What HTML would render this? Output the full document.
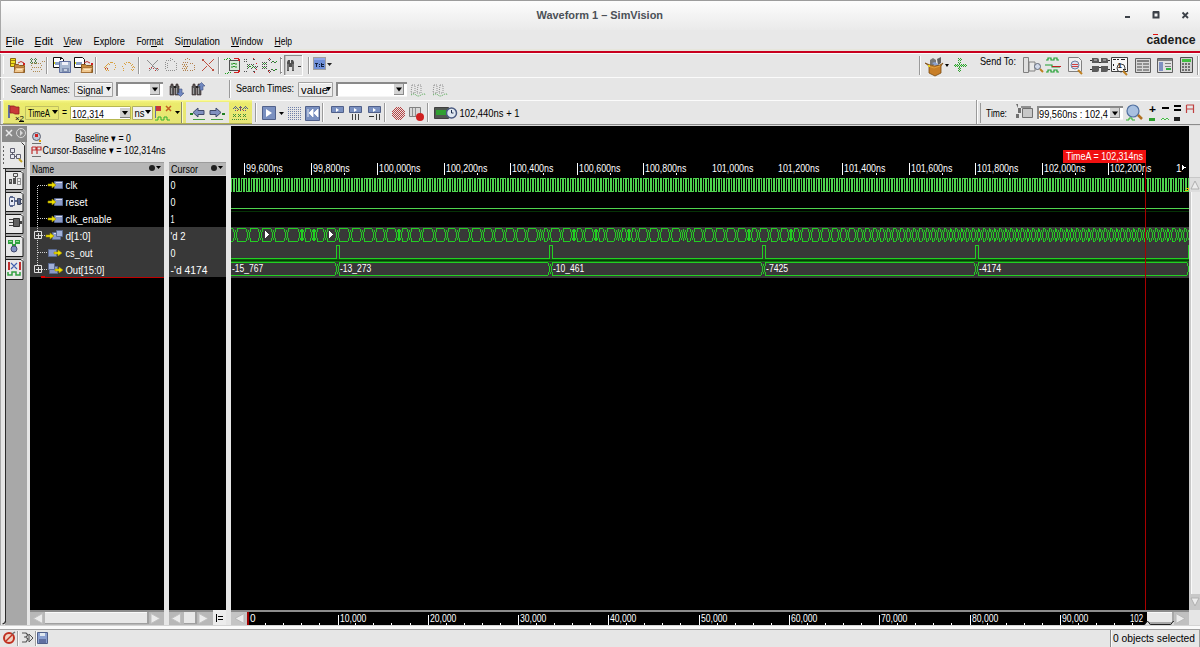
<!DOCTYPE html><html><head><meta charset="utf-8"><style>html,body{margin:0;padding:0;width:1200px;height:647px;overflow:hidden;background:#e6e6e6}svg{display:block}text{font-family:"Liberation Sans",sans-serif}</style></head><body><svg width="1200" height="647" viewBox="0 0 1200 647"><defs><linearGradient id="tg" x1="0" y1="0" x2="0" y2="1"><stop offset="0" stop-color="#fdfdfd"/><stop offset="1" stop-color="#eaeaea"/></linearGradient><linearGradient id="yg" x1="0" y1="0" x2="0" y2="1"><stop offset="0" stop-color="#f4f488"/><stop offset="0.15" stop-color="#ebeb6c"/><stop offset="1" stop-color="#e6e478"/></linearGradient></defs>
<rect x="0" y="0" width="1200" height="647" fill="#e6e6e6" />
<rect x="0" y="0" width="1200" height="30" fill="url(#tg)" />
<rect x="0" y="0" width="1200" height="1" fill="#9c9c9c" />
<text x="536.5" y="19" font-size="11" fill="#4b5057" font-weight="bold" textLength="126.5" lengthAdjust="spacingAndGlyphs">Waveform 1 – SimVision</text>
<rect x="1125" y="16" width="5" height="2" fill="#3c4148" />
<path d="M1153.5,12.5h5v5h-5z" fill="none" stroke="#3c4148" stroke-width="2" />
<rect x="1153" y="11" width="6" height="2" fill="#3c4148" />
<path d="M1182.5,12.5l5.5,5.5M1188,12.5l-5.5,5.5" fill="none" stroke="#3c4148" stroke-width="1.8" />
<rect x="0" y="30" width="1200" height="21" fill="#e8e8e8" />
<rect x="0" y="49" width="1200" height="2" fill="#e6e6dc" />
<text x="5.6" y="45" font-size="11" fill="#000" textLength="18.4" lengthAdjust="spacingAndGlyphs">File</text>
<text x="34.5" y="45" font-size="11" fill="#000" textLength="18.5" lengthAdjust="spacingAndGlyphs">Edit</text>
<text x="63.5" y="45" font-size="11" fill="#000" textLength="18.5" lengthAdjust="spacingAndGlyphs">View</text>
<text x="93.5" y="45" font-size="11" fill="#000" textLength="31.5" lengthAdjust="spacingAndGlyphs">Explore</text>
<text x="136.4" y="45" font-size="11" fill="#000" textLength="27" lengthAdjust="spacingAndGlyphs">Format</text>
<text x="174.6" y="45" font-size="11" fill="#000" textLength="45.4" lengthAdjust="spacingAndGlyphs">Simulation</text>
<text x="231" y="45" font-size="11" fill="#000" textLength="32" lengthAdjust="spacingAndGlyphs">Window</text>
<text x="274.5" y="45" font-size="11" fill="#000" textLength="17.5" lengthAdjust="spacingAndGlyphs">Help</text>
<rect x="6" y="46" width="6" height="1" fill="#000" />
<rect x="34.5" y="46" width="6" height="1" fill="#000" />
<rect x="63.5" y="46" width="6" height="1" fill="#000" />
<rect x="151" y="46" width="6" height="1" fill="#000" />
<rect x="183" y="46" width="7" height="1" fill="#000" />
<rect x="231" y="46" width="8" height="1" fill="#000" />
<rect x="274.5" y="46" width="6" height="1" fill="#000" />
<text x="1146.5" y="44" font-size="12.5" fill="#1c1c1c" font-weight="bold" textLength="49" lengthAdjust="spacingAndGlyphs">cadence</text>
<rect x="1153" y="34" width="5" height="1" fill="#e01010" />
<rect x="0" y="0" width="1" height="647" fill="#a8a8a8" />
<rect x="0" y="51" width="1200" height="2" fill="#c8001e" />
<rect x="0" y="53" width="1200" height="1" fill="#fbfbfb" />
<rect x="0" y="77" width="1200" height="1" fill="#fbfbfb" />
<rect x="0" y="100" width="1200" height="1" fill="#fbfbfb" />
<rect x="0" y="124" width="1200" height="1" fill="#8c8c8c" />
<rect x="0" y="125" width="1200" height="1" fill="#dcdcdc" />
<rect x="46" y="57" width="1" height="17" fill="#9a9a9a" />
<rect x="47" y="57" width="1" height="17" fill="#fdfdfd" />
<rect x="95" y="57" width="1" height="17" fill="#9a9a9a" />
<rect x="96" y="57" width="1" height="17" fill="#fdfdfd" />
<rect x="138" y="57" width="1" height="17" fill="#9a9a9a" />
<rect x="139" y="57" width="1" height="17" fill="#fdfdfd" />
<rect x="218" y="57" width="1" height="17" fill="#9a9a9a" />
<rect x="219" y="57" width="1" height="17" fill="#fdfdfd" />
<rect x="280" y="57" width="1" height="17" fill="#9a9a9a" />
<rect x="281" y="57" width="1" height="17" fill="#fdfdfd" />
<rect x="308" y="57" width="1" height="17" fill="#9a9a9a" />
<rect x="309" y="57" width="1" height="17" fill="#fdfdfd" />
<rect x="919" y="56" width="1" height="19" fill="#9a9a9a" />
<rect x="920" y="56" width="1" height="19" fill="#fdfdfd" />
<rect x="1197" y="56" width="1" height="19" fill="#9a9a9a" />
<rect x="1198" y="56" width="1" height="19" fill="#fdfdfd" />
<rect x="3" y="56" width="1" height="18" fill="#fdfdfd" />
<path d="M10.5,58.5h5v8h-5z" fill="#f0e020" stroke="#8a6a10" stroke-width="1" />
<rect x="11" y="60" width="4" height="1" fill="#a08010" />
<rect x="11" y="63" width="4" height="1" fill="#a08010" />
<path d="M14.5,64.5h4l1,1h5v7h-10z" fill="#c88a40" stroke="#8a5a20" stroke-width="1" />
<path d="M15.5,67.5h9l-1.5,5h-9z" fill="#f0c890" stroke="#a06a30" stroke-width="0.8" />
<rect x="17" y="69" width="5" height="1" fill="#fce8c0" />
<path d="M18,63q3,-3 6,0" fill="none" stroke="#c03030" stroke-width="1" />
<rect x="23" y="63" width="2" height="2" fill="#d02020" />
<path d="M30,59h1v1h-1zM32,59h1v1h-1zM31,58h1v1h-1zM31,60h1v1h-1zM34,59h1v1h-1zM36,59h1v1h-1zM35,58h1v1h-1zM35,60h1v1h-1zM30,62h1v1h-1zM32,62h1v1h-1zM31,61h1v1h-1zM31,63h1v1h-1zM34,62h1v1h-1zM36,62h1v1h-1zM35,61h1v1h-1zM35,63h1v1h-1z" fill="#508050" shape-rendering="crispEdges"/>
<path d="M32,63h1v1h-1zM34,63h1v1h-1zM36,63h1v1h-1zM38,63h1v1h-1zM40,63h1v1h-1zM31,65h1v1h-1zM41,65h1v1h-1zM32,67h1v1h-1zM34,67h1v1h-1zM36,67h1v1h-1zM38,67h1v1h-1zM40,67h1v1h-1zM31,69h1v1h-1zM41,69h1v1h-1zM33,71h1v1h-1zM35,71h1v1h-1zM37,71h1v1h-1zM39,71h1v1h-1zM42,61h1v1h-1zM44,61h1v1h-1z" fill="#b08a50" shape-rendering="crispEdges"/>
<path d="M53.5,57.5h8l2,2v8h-10z" fill="#fff" stroke="#101010" stroke-width="1" />
<rect x="55" y="62" width="6" height="3" fill="#8aa0c8" />
<rect x="54" y="62" width="1" height="2" fill="#e0e000" />
<path d="M59.5,61.5h11v11h-11z" fill="#a8b8d0" stroke="#6070a0" stroke-width="1" />
<rect x="62" y="62" width="6" height="3" fill="#eef0f8" />
<rect x="62" y="68" width="7" height="4" fill="#8090b0" />
<rect x="64" y="69" width="3" height="2" fill="#c8d0e0" />
<rect x="60" y="57" width="1" height="3" fill="#101010" />
<rect x="61" y="58" width="2" height="1" fill="#101010" />
<path d="M74.5,57.5h8l2,2v8h-10z" fill="#fff" stroke="#101010" stroke-width="1" />
<rect x="76" y="62" width="6" height="3" fill="#8aa0c8" />
<rect x="75" y="62" width="1" height="2" fill="#e0e000" />
<path d="M81.5,64.5h4l1,1h6v7h-11z" fill="#c88a40" stroke="#8a5a20" stroke-width="1" />
<path d="M82.5,67.5h10l-1.5,5h-10z" fill="#f0c890" stroke="#a06a30" stroke-width="0.8" />
<rect x="84" y="69" width="6" height="1" fill="#fce8c0" />
<path d="M84,63q3,-3 6,0" fill="none" stroke="#c03030" stroke-width="1" />
<rect x="91" y="63" width="2" height="2" fill="#d02020" />
<path d="M105,66h1v1h-1zM106,65h1v1h-1zM107,64h1v1h-1zM108,63h1v1h-1zM110,62h1v1h-1zM112,62h1v1h-1zM114,63h1v1h-1zM115,65h1v1h-1zM115,67h1v1h-1zM114,69h1v1h-1zM104,67h1v1h-1zM106,67h1v1h-1zM105,69h1v1h-1zM107,69h1v1h-1zM106,70h1v1h-1zM108,70h1v1h-1zM109,64h1v1h-1zM111,62h1v1h-1z" fill="#d8a040" shape-rendering="crispEdges"/>
<path d="M124,63h1v1h-1zM126,62h1v1h-1zM128,62h1v1h-1zM130,63h1v1h-1zM132,64h1v1h-1zM133,66h1v1h-1zM134,67h1v1h-1zM132,67h1v1h-1zM131,69h1v1h-1zM133,69h1v1h-1zM132,70h1v1h-1zM122,66h1v1h-1zM123,68h1v1h-1zM123,70h1v1h-1zM125,64h1v1h-1zM129,62h1v1h-1zM131,65h1v1h-1z" fill="#d8a040" shape-rendering="crispEdges"/>
<path d="M105,68h1v1h-1zM107,68h1v1h-1z" fill="#c03030" shape-rendering="crispEdges"/>
<path d="M147,60h1v1h-1zM148,61h1v1h-1zM149,62h1v1h-1zM150,63h1v1h-1zM151,64h1v1h-1zM152,65h1v1h-1zM153,66h1v1h-1zM154,67h1v1h-1zM155,68h1v1h-1zM156,69h1v1h-1zM157,70h1v1h-1zM157,60h1v1h-1zM156,61h1v1h-1zM155,62h1v1h-1zM154,63h1v1h-1zM153,64h1v1h-1zM152,66h1v1h-1zM151,68h1v1h-1zM150,69h1v1h-1zM149,70h1v1h-1zM156,68h1v1h-1zM158,69h1v1h-1z" fill="#909090" shape-rendering="crispEdges"/>
<path d="M151,67h1v1h-1zM153,68h1v1h-1zM155,70h1v1h-1zM149,68h1v1h-1zM157,68h1v1h-1z" fill="#c03030" shape-rendering="crispEdges"/>
<path d="M166,60h1v1h-1zM168,60h1v1h-1zM170,60h1v1h-1zM165,62h1v1h-1zM165,64h1v1h-1zM165,66h1v1h-1zM165,68h1v1h-1zM166,70h1v1h-1zM168,70h1v1h-1zM170,70h1v1h-1zM172,70h1v1h-1zM174,70h1v1h-1zM176,69h1v1h-1zM176,67h1v1h-1zM176,65h1v1h-1zM176,63h1v1h-1zM174,61h1v1h-1zM172,59h1v1h-1zM170,58h1v1h-1zM167,63h1v1h-1zM167,65h1v1h-1zM167,67h1v1h-1z" fill="#909090" shape-rendering="crispEdges"/>
<path d="M187,58h1v1h-1zM189,59h1v1h-1zM185,59h1v1h-1zM183,62h1v1h-1zM185,62h1v1h-1zM187,62h1v1h-1zM182,64h1v1h-1zM184,64h1v1h-1zM186,64h1v1h-1zM183,66h1v1h-1zM185,66h1v1h-1zM187,66h1v1h-1zM182,68h1v1h-1zM184,68h1v1h-1zM186,68h1v1h-1zM183,70h1v1h-1zM185,70h1v1h-1zM187,70h1v1h-1zM190,63h1v1h-1zM192,63h1v1h-1zM194,65h1v1h-1zM194,67h1v1h-1zM194,69h1v1h-1zM192,70h1v1h-1zM190,70h1v1h-1z" fill="#b08050" shape-rendering="crispEdges"/>
<path d="M184,65h1v1h-1zM186,67h1v1h-1zM185,69h1v1h-1z" fill="#d8a860" shape-rendering="crispEdges"/>
<path d="M202,59h1v1h-1zM203,60h1v1h-1zM204,61h1v1h-1zM205,62h1v1h-1zM206,63h1v1h-1zM207,64h1v1h-1zM208,65h1v1h-1zM209,66h1v1h-1zM210,67h1v1h-1zM211,68h1v1h-1zM212,69h1v1h-1zM213,70h1v1h-1zM213,59h1v1h-1zM212,60h1v1h-1zM211,61h1v1h-1zM210,62h1v1h-1zM209,63h1v1h-1zM206,66h1v1h-1zM205,67h1v1h-1zM204,68h1v1h-1zM203,69h1v1h-1zM202,70h1v1h-1zM203,59h1v1h-1zM202,60h1v1h-1zM212,70h1v1h-1zM213,69h1v1h-1z" fill="#c05040" shape-rendering="crispEdges"/>
<rect x="229" y="60" width="1" height="11" fill="#505050" />
<rect x="229" y="60" width="11" height="1" fill="#505050" />
<rect x="229" y="70" width="11" height="1" fill="#505050" />
<rect x="239" y="60" width="1" height="11" fill="#505050" />
<rect x="230" y="61" width="9" height="9" fill="#d8e8d8" />
<path d="M231,64h2l1,-1 1,1h2M231,67h2l1,-1 1,1h2" fill="none" stroke="#209020" stroke-width="1" />
<path d="M224,59h1v1h-1zM226,59h1v1h-1zM227,58h1v1h-1zM229,58h1v1h-1zM230,59h1v1h-1zM225,73h1v1h-1zM227,73h1v1h-1zM228,72h1v1h-1zM230,72h1v1h-1z" fill="#20a020" shape-rendering="crispEdges"/>
<rect x="234" y="58" width="5" height="1" fill="#d02020" />
<rect x="238" y="59" width="2" height="2" fill="#d02020" />
<rect x="234" y="72" width="5" height="1" fill="#d02020" />
<rect x="238" y="70" width="2" height="2" fill="#d02020" />
<path d="M244,59h1v1h-1zM244,61h1v1h-1zM246,59h1v1h-1zM246,61h1v1h-1zM253,59h1v1h-1zM254,59h1v1h-1zM244,71h1v1h-1zM246,71h1v1h-1zM253,71h1v1h-1zM254,71h1v1h-1zM247,64h1v1h-1zM249,66h1v1h-1zM247,68h1v1h-1zM249,64h1v1h-1zM247,66h1v1h-1zM251,64h1v1h-1zM253,66h1v1h-1zM251,68h1v1h-1zM253,64h1v1h-1zM255,66h1v1h-1zM256,67h1v1h-1zM257,66h1v1h-1zM255,68h1v1h-1z" fill="#505050" shape-rendering="crispEdges"/>
<path d="M248,65h1v1h-1zM252,65h1v1h-1zM248,67h1v1h-1zM252,67h1v1h-1zM250,66h1v1h-1zM254,67h1v1h-1z" fill="#20a020" shape-rendering="crispEdges"/>
<path d="M253,58h1v1h-1zM254,72h1v1h-1zM256,63h1v1h-1zM256,69h1v1h-1z" fill="#d02020" shape-rendering="crispEdges"/>
<path d="M262,62h1v1h-1zM262,64h1v1h-1zM262,66h1v1h-1zM262,68h1v1h-1zM264,62h1v1h-1zM264,64h1v1h-1zM264,66h1v1h-1zM264,68h1v1h-1zM266,62h1v1h-1zM266,68h1v1h-1zM268,59h1v1h-1zM269,60h1v1h-1zM270,59h1v1h-1zM268,71h1v1h-1zM269,70h1v1h-1zM270,71h1v1h-1zM271,62h1v1h-1zM273,61h1v1h-1zM275,62h1v1h-1zM271,69h1v1h-1zM273,70h1v1h-1zM275,69h1v1h-1zM266,64h1v1h-1zM266,66h1v1h-1z" fill="#505050" shape-rendering="crispEdges"/>
<path d="M263,63h1v1h-1zM265,63h1v1h-1zM263,67h1v1h-1zM265,67h1v1h-1zM272,61h1v1h-1zM274,62h1v1h-1zM272,69h1v1h-1zM274,70h1v1h-1zM276,61h1v1h-1zM276,69h1v1h-1z" fill="#20a020" shape-rendering="crispEdges"/>
<path d="M269,58h1v1h-1zM269,72h1v1h-1zM268,70h1v1h-1z" fill="#d02020" shape-rendering="crispEdges"/>
<rect x="284" y="55" width="19" height="21" fill="#e0e0e0" />
<rect x="284" y="55" width="19" height="1" fill="#8a8a8a" />
<rect x="284" y="55" width="1" height="21" fill="#8a8a8a" />
<rect x="285" y="56" width="1" height="20" fill="#c0c0c0" />
<rect x="284" y="75" width="19" height="1" fill="#fdfdfd" />
<rect x="302" y="55" width="1" height="21" fill="#fdfdfd" />
<path d="M287,62l1,-2h2v3h1v-3h2l1,2v9h-2v-4h-3v4h-2z" fill="#505050" />
<rect x="287" y="64" width="2" height="6" fill="#707070" />
<rect x="292" y="64" width="2" height="6" fill="#707070" />
<rect x="298" y="66" width="3" height="1" fill="#303030" />
<rect x="280" y="58" width="2" height="1" fill="#8a8a8a" />
<rect x="280" y="72" width="2" height="1" fill="#8a8a8a" />
<rect x="313" y="57" width="13" height="13" fill="#a0a0a0" />
<rect x="314" y="58" width="11" height="11" fill="#7090d8" />
<rect x="314" y="58" width="11" height="2" fill="#90a8e8" />
<rect x="315" y="63" width="3" height="1" fill="#102040" />
<rect x="316" y="63" width="1" height="4" fill="#102040" />
<rect x="319" y="64" width="1" height="1" fill="#102040" />
<rect x="319" y="66" width="1" height="1" fill="#102040" />
<rect x="321" y="63" width="1" height="4" fill="#102040" />
<rect x="322" y="64" width="2" height="1" fill="#102040" />
<rect x="322" y="66" width="2" height="1" fill="#102040" />
<path d="M327,63h5l-2.5,3z" fill="#202020" />
<path d="M930,60l3,-2 3,2v5h-6z" fill="#787878" />
<path d="M937,59l4,-2v6l-3,2z" fill="#606060" />
<path d="M932,63l5,4 2,-2-4,-3z" fill="#8aa0d0" />
<path d="M925,63l5,2 5,1 5,-1 3,-2-2,3v7l-6,3-6,-3v-7z" fill="#c87f28" stroke="#7a4a10" stroke-width="0.8" />
<path d="M928,66l6,2 6,-2" fill="none" stroke="#e0a040" stroke-width="1" />
<rect x="928" y="65" width="2" height="2" fill="#e8d020" />
<path d="M945,64h4l-2,3z" fill="#000" />
<path d="M958,58h1v1h-1zM960,58h1v1h-1zM959,59h1v1h-1zM961,59h1v1h-1zM958,60h1v1h-1zM960,60h1v1h-1zM958,62h1v1h-1zM960,62h1v1h-1zM959,63h1v1h-1zM955,64h1v1h-1zM957,64h1v1h-1zM959,64h1v1h-1zM961,64h1v1h-1zM963,64h1v1h-1zM965,64h1v1h-1zM954,65h1v1h-1zM956,65h1v1h-1zM958,65h1v1h-1zM960,65h1v1h-1zM962,65h1v1h-1zM964,65h1v1h-1zM966,65h1v1h-1zM955,66h1v1h-1zM957,66h1v1h-1zM959,66h1v1h-1zM961,66h1v1h-1zM963,66h1v1h-1zM965,66h1v1h-1zM959,67h1v1h-1zM958,68h1v1h-1zM960,68h1v1h-1zM959,69h1v1h-1zM958,70h1v1h-1zM960,70h1v1h-1zM959,71h1v1h-1z" fill="#30a030" shape-rendering="crispEdges"/>
<path d="M959,61h1v1h-1zM957,65h1v1h-1zM961,65h1v1h-1zM959,68h1v1h-1zM955,65h1v1h-1zM963,65h1v1h-1z" fill="#a0e8a0" shape-rendering="crispEdges"/>
<text x="980" y="65" font-size="10.5" fill="#000" textLength="36" lengthAdjust="spacingAndGlyphs">Send To:</text>
<path d="M1023.5,57.5h5v15h-5z" fill="#e0e0e0" stroke="#808080" stroke-width="1" />
<path d="M1029,62h6v9h-6z" fill="#e8e8e8" stroke="#808080" stroke-width="1" />
<path d="M1037.5,66.5m-3,0a3,3 0 1,0 6,0a3,3 0 1,0 -6,0" fill="#d0d8e8" stroke="#606878" stroke-width="1" />
<path d="M1040,69l3,3" fill="none" stroke="#c08020" stroke-width="2" />
<path d="M1046,60h2v-2h3v2h3v-2h3v2h2M1045,65h7v2h8M1046,72h2v-2h3v2h3v-2h3v2h2" fill="none" stroke="#20a030" stroke-width="1.2" />
<rect x="1052" y="66" width="9" height="1" fill="#c02020" />
<path d="M1068.5,57.5h10l3,3v11h-13z" fill="#f0f0f0" stroke="#808080" stroke-width="1" />
<path d="M1075,65m-4,0a4,4 0 1,0 8,0a4,4 0 1,0 -8,0" fill="#d8e0f0" stroke="#7080a0" stroke-width="1" />
<rect x="1072" y="64" width="6" height="1" fill="#d04040" />
<rect x="1072" y="66" width="6" height="1" fill="#d04040" />
<path d="M1078,70l4,4" fill="none" stroke="#c08020" stroke-width="2" />
<path d="M1092,58h5a2,2 0 0 1 2,2v3h-7zM1101,58h5a2,2 0 0 1 2,2v3h-7zM1092,66h7v4a2,2 0 0 1 -2,2h-5zM1101,66h7v4a2,2 0 0 1 -2,2h-5z" fill="#5a5a5a" />
<rect x="1090" y="60" width="2" height="1" fill="#303030" />
<rect x="1090" y="69" width="2" height="1" fill="#303030" />
<rect x="1099" y="62" width="2" height="1" fill="#303030" />
<rect x="1099" y="67" width="2" height="1" fill="#303030" />
<rect x="1108" y="60" width="2" height="1" fill="#303030" />
<rect x="1108" y="69" width="2" height="1" fill="#303030" />
<rect x="1094" y="59" width="3" height="2" fill="#909090" />
<rect x="1103" y="59" width="3" height="2" fill="#909090" />
<path d="M1111.5,57.5h16v14h-16z" fill="#f8f8f8" stroke="#404040" stroke-width="1" />
<rect x="1113" y="59" width="3" height="1" fill="#202020" />
<rect x="1117" y="59" width="2" height="1" fill="#202020" />
<rect x="1121" y="59" width="4" height="1" fill="#202020" />
<rect x="1113" y="69" width="2" height="1" fill="#202020" />
<rect x="1123" y="69" width="3" height="1" fill="#202020" />
<rect x="1113" y="64" width="1" height="2" fill="#202020" />
<text x="1117.5" y="68" font-size="8" fill="#202020" font-weight="bold">1</text>
<path d="M1121,68m-4,0a4,4 0 1,0 8,0a4,4 0 1,0 -8,0" fill="none" stroke="#404040" stroke-width="1" />
<path d="M1123,71l4,4" fill="none" stroke="#c08020" stroke-width="2" />
<path d="M1135.5,58.5h15v14h-15z" fill="#d8d8d8" stroke="#606060" stroke-width="1" />
<rect x="1137" y="60" width="12" height="2" fill="#808080" />
<rect x="1137" y="63" width="5" height="2" fill="#909090" />
<rect x="1143" y="63" width="6" height="2" fill="#909090" />
<rect x="1137" y="66" width="5" height="2" fill="#909090" />
<rect x="1143" y="66" width="6" height="2" fill="#909090" />
<rect x="1137" y="69" width="5" height="2" fill="#909090" />
<rect x="1143" y="69" width="6" height="2" fill="#909090" />
<path d="M1157.5,58.5h15v14h-15z" fill="#e0e0e0" stroke="#606060" stroke-width="1" />
<rect x="1158" y="59" width="14" height="2" fill="#808080" />
<rect x="1159" y="62" width="4" height="9" fill="#8090c0" />
<rect x="1165" y="63" width="6" height="1" fill="#808080" />
<rect x="1165" y="66" width="6" height="1" fill="#808080" />
<rect x="1166" y="68" width="5" height="2" fill="#30b040" />
<path d="M1180.5,57.5h12v15h-12z" fill="#d0d0d0" stroke="#505050" stroke-width="1" />
<rect x="1182" y="59" width="9" height="3" fill="#40c040" />
<rect x="1182" y="63" width="2" height="2" fill="#707070" />
<rect x="1182" y="66" width="2" height="2" fill="#707070" />
<rect x="1182" y="69" width="2" height="2" fill="#707070" />
<rect x="1185" y="63" width="2" height="2" fill="#707070" />
<rect x="1185" y="66" width="2" height="2" fill="#707070" />
<rect x="1185" y="69" width="2" height="2" fill="#707070" />
<rect x="1188" y="63" width="2" height="2" fill="#707070" />
<rect x="1188" y="66" width="2" height="2" fill="#707070" />
<rect x="1188" y="69" width="2" height="2" fill="#707070" />
<rect x="3" y="80" width="1" height="18" fill="#fdfdfd" />
<text x="10.5" y="93" font-size="10.5" fill="#000" textLength="59.5" lengthAdjust="spacingAndGlyphs">Search Names:</text>
<path d="M74.5,82.5h38v14h-38z" fill="#ececec" stroke="#a2a2a2" stroke-width="1" />
<rect x="75" y="83" width="37" height="1" fill="#fafafa" />
<text x="77" y="93.5" font-size="10.5" fill="#000" textLength="26" lengthAdjust="spacingAndGlyphs">Signal</text>
<path d="M106,87h5l-2.5,4z" fill="#000" />
<rect x="116" y="82" width="47" height="15" fill="#fff" />
<rect x="116" y="82" width="47" height="2" fill="#8a8a8a" />
<rect x="116" y="82" width="2" height="15" fill="#8a8a8a" />
<rect x="116" y="96" width="47" height="1" fill="#f4f4f4" />
<rect x="150" y="84" width="10" height="11" fill="#d4d4d4" />
<rect x="150" y="94" width="10" height="1" fill="#8a8a8a" />
<rect x="159" y="84" width="1" height="11" fill="#8a8a8a" />
<path d="M152,87.5h6l-3,4z" fill="#000" />
<path d="M171,84h2v2h1v9h-4v-9h1z M176,84h2v2h1v9h-4v-9h1z" fill="#585858" stroke="#3a2a2a" stroke-width="0.6" />
<rect x="171" y="88" width="1" height="6" fill="#a0a0a0" />
<rect x="176" y="88" width="1" height="6" fill="#a0a0a0" />
<rect x="174" y="86" width="2" height="2" fill="#202020" />
<path d="M179,89h3v4h2l-3.5,3.5-3.5,-3.5h2z" fill="#7088c0" stroke="#405080" stroke-width="0.6" />
<path d="M193,84h2v2h1v9h-4v-9h1z M198,84h2v2h1v9h-4v-9h1z" fill="#585858" stroke="#3a2a2a" stroke-width="0.6" />
<rect x="193" y="88" width="1" height="6" fill="#a0a0a0" />
<rect x="198" y="88" width="1" height="6" fill="#a0a0a0" />
<rect x="196" y="86" width="2" height="2" fill="#202020" />
<path d="M200,90h3v-4h2l-3.5,-3.5-3.5,3.5h2z" fill="#7088c0" stroke="#405080" stroke-width="0.6" />
<rect x="229" y="80" width="1" height="18" fill="#9a9a9a" />
<rect x="230" y="80" width="1" height="18" fill="#fdfdfd" />
<text x="236" y="92" font-size="10.5" fill="#000" textLength="58" lengthAdjust="spacingAndGlyphs">Search Times:</text>
<path d="M298.5,82.5h34v14h-34z" fill="#ececec" stroke="#a2a2a2" stroke-width="1" />
<rect x="299" y="83" width="33" height="1" fill="#fafafa" />
<text x="301" y="93.5" font-size="10.5" fill="#000" textLength="27" lengthAdjust="spacingAndGlyphs">value</text>
<path d="M326,87h5l-2.5,4z" fill="#000" />
<rect x="336" y="82" width="71" height="15" fill="#fff" />
<rect x="336" y="82" width="71" height="2" fill="#8a8a8a" />
<rect x="336" y="82" width="2" height="15" fill="#8a8a8a" />
<rect x="336" y="96" width="71" height="1" fill="#f4f4f4" />
<rect x="394" y="84" width="10" height="11" fill="#d4d4d4" />
<rect x="394" y="94" width="10" height="1" fill="#8a8a8a" />
<rect x="403" y="84" width="1" height="11" fill="#8a8a8a" />
<path d="M396,87.5h6l-3,4z" fill="#000" />
<path d="M412,85h3v8h-4zM418,85h3v8h-4z" fill="none" stroke="#909090" stroke-width="1" stroke-dasharray="1 1"/>
<path d="M411,95q3,-2 5,0t5,0t5,0" fill="none" stroke="#40a040" stroke-width="1" stroke-dasharray="1 1"/>
<path d="M434,85h3v8h-4zM440,85h3v8h-4z" fill="none" stroke="#909090" stroke-width="1" stroke-dasharray="1 1"/>
<path d="M433,95q3,-2 5,0t5,0t5,0" fill="none" stroke="#40a040" stroke-width="1" stroke-dasharray="1 1"/>
<path d="M3,100h249v24h-249z" fill="url(#yg)" />
<rect x="3" y="100" width="249" height="1" fill="#fafa98" />
<rect x="3" y="123" width="249" height="1" fill="#b0b050" />
<rect x="3" y="101" width="1" height="22" fill="#f8f8a0" />
<rect x="186" y="102" width="43" height="21" fill="#e6e6e2" />
<rect x="181" y="102" width="1" height="21" fill="#8a8a6a" />
<rect x="182" y="102" width="1" height="21" fill="#fafac0" />
<rect x="8" y="105" width="2" height="13" fill="#6070a0" />
<path d="M10,106h4l2,1h3v7h-4l-2,-1h-3z" fill="#c83838" stroke="#902020" stroke-width="0.8" />
<text x="15" y="121" font-size="7.5" fill="#000" textLength="9" lengthAdjust="spacingAndGlyphs">×2</text>
<rect x="19" y="121" width="5" height="1" fill="#000" />
<path d="M25.5,106.5h33v13h-33z" fill="none" stroke="#c0c060" stroke-width="1" />
<text x="28" y="117" font-size="10.5" fill="#000" textLength="22" lengthAdjust="spacingAndGlyphs">TimeA</text>
<path d="M52,110h6l-3,4z" fill="#000" />
<text x="62" y="116" font-size="10.5" fill="#000" textLength="5" lengthAdjust="spacingAndGlyphs">=</text>
<rect x="70" y="106" width="61" height="14" fill="#fff" />
<path d="M70.5,106.5h60v13h-60z" fill="none" stroke="#b8b850" stroke-width="1" />
<text x="72" y="117.5" font-size="10.5" fill="#000" textLength="32" lengthAdjust="spacingAndGlyphs">102,314</text>
<rect x="120" y="108" width="10" height="10" fill="#d0d0d0" />
<rect x="120" y="117" width="10" height="1" fill="#808080" />
<path d="M122,111h6l-3,4z" fill="#000" />
<path d="M132.5,106.5h20v13h-20z" fill="#f0f0f0" stroke="#b0b060" stroke-width="1" />
<text x="134.5" y="117" font-size="10.5" fill="#000" textLength="10" lengthAdjust="spacingAndGlyphs">ns</text>
<path d="M145,110h6l-3,4z" fill="#000" />
<rect x="155" y="106" width="1" height="12" fill="#6070a0" />
<path d="M156,106h5v5h-5z" fill="#c83838" />
<path d="M166,106l5,5M171,106l-5,5" fill="none" stroke="#c06020" stroke-width="1.5" />
<path d="M155,120h3v-3h3v3h3v-3h3v3h3" fill="none" stroke="#30b030" stroke-width="1" />
<path d="M175,111h5l-2.5,3z" fill="#000" />
<path d="M198,108l-5,4.5 5,4.5v-2.5h6v-4h-6z" fill="#8090c0" stroke="#404a6a" stroke-width="1" />
<rect x="190" y="113" width="3" height="2" fill="#208020" />
<rect x="193" y="119" width="12" height="1" fill="#40a040" />
<path d="M216,108l5,4.5-5,4.5v-2.5h-6v-4h6z" fill="#8090c0" stroke="#404a6a" stroke-width="1" />
<rect x="222" y="113" width="3" height="2" fill="#208020" />
<rect x="211" y="119" width="12" height="1" fill="#40a040" />
<path d="M233,108h1v1h-1zM234,107h1v1h-1zM235,106h1v1h-1zM236,107h1v1h-1zM237,108h1v1h-1zM235,108h1v1h-1zM235,110h1v1h-1zM240,106h1v1h-1zM240,108h1v1h-1zM240,110h1v1h-1zM239,107h1v1h-1zM241,107h1v1h-1zM243,108h1v1h-1zM244,107h1v1h-1zM245,106h1v1h-1zM246,107h1v1h-1zM247,108h1v1h-1zM245,108h1v1h-1zM245,110h1v1h-1zM238,109h1v1h-1zM242,109h1v1h-1z" fill="#506090" shape-rendering="crispEdges"/>
<path d="M240,107h1v1h-1zM240,109h1v1h-1zM237,110h1v1h-1zM243,110h1v1h-1z" fill="#b04040" shape-rendering="crispEdges"/>
<path d="M233,114h1v1h-1zM235,114h1v1h-1zM234,115h1v1h-1zM233,116h1v1h-1zM235,116h1v1h-1zM238,114h1v1h-1zM240,114h1v1h-1zM239,115h1v1h-1zM238,116h1v1h-1zM240,116h1v1h-1zM243,114h1v1h-1zM245,114h1v1h-1zM244,115h1v1h-1zM243,116h1v1h-1zM245,116h1v1h-1zM232,119h1v1h-1zM234,119h1v1h-1zM236,119h1v1h-1zM238,119h1v1h-1zM240,119h1v1h-1zM242,119h1v1h-1zM244,119h1v1h-1zM246,119h1v1h-1z" fill="#40903a" shape-rendering="crispEdges"/>
<rect x="255" y="103" width="1" height="19" fill="#9a9a9a" />
<rect x="256" y="103" width="1" height="19" fill="#fdfdfd" />
<path d="M262.5,106.5h13v13h-13z" fill="#7a90c0" stroke="#50608a" stroke-width="1" />
<path d="M266,109v8l6,-4z" fill="#fff" />
<path d="M279,112h5l-2.5,3z" fill="#000" />
<rect x="288" y="107" width="1" height="1" fill="#7080a8" />
<rect x="288" y="111" width="1" height="1" fill="#7080a8" />
<rect x="288" y="115" width="1" height="1" fill="#7080a8" />
<rect x="288" y="119" width="1" height="1" fill="#7080a8" />
<rect x="290" y="109" width="1" height="1" fill="#7080a8" />
<rect x="290" y="113" width="1" height="1" fill="#7080a8" />
<rect x="290" y="117" width="1" height="1" fill="#7080a8" />
<rect x="292" y="107" width="1" height="1" fill="#7080a8" />
<rect x="292" y="111" width="1" height="1" fill="#7080a8" />
<rect x="292" y="115" width="1" height="1" fill="#7080a8" />
<rect x="292" y="119" width="1" height="1" fill="#7080a8" />
<rect x="294" y="109" width="1" height="1" fill="#7080a8" />
<rect x="294" y="113" width="1" height="1" fill="#7080a8" />
<rect x="294" y="117" width="1" height="1" fill="#7080a8" />
<rect x="296" y="107" width="1" height="1" fill="#7080a8" />
<rect x="296" y="111" width="1" height="1" fill="#7080a8" />
<rect x="296" y="115" width="1" height="1" fill="#7080a8" />
<rect x="296" y="119" width="1" height="1" fill="#7080a8" />
<rect x="298" y="109" width="1" height="1" fill="#7080a8" />
<rect x="298" y="113" width="1" height="1" fill="#7080a8" />
<rect x="298" y="117" width="1" height="1" fill="#7080a8" />
<rect x="300" y="107" width="1" height="1" fill="#7080a8" />
<rect x="300" y="111" width="1" height="1" fill="#7080a8" />
<rect x="300" y="115" width="1" height="1" fill="#7080a8" />
<rect x="300" y="119" width="1" height="1" fill="#7080a8" />
<rect x="288" y="109" width="1" height="1" fill="#7080a8" />
<rect x="288" y="113" width="1" height="1" fill="#7080a8" />
<rect x="288" y="117" width="1" height="1" fill="#7080a8" />
<rect x="290" y="107" width="1" height="1" fill="#7080a8" />
<rect x="290" y="111" width="1" height="1" fill="#7080a8" />
<rect x="290" y="115" width="1" height="1" fill="#7080a8" />
<rect x="290" y="119" width="1" height="1" fill="#7080a8" />
<rect x="292" y="109" width="1" height="1" fill="#7080a8" />
<rect x="292" y="113" width="1" height="1" fill="#7080a8" />
<rect x="292" y="117" width="1" height="1" fill="#7080a8" />
<rect x="294" y="107" width="1" height="1" fill="#7080a8" />
<rect x="294" y="111" width="1" height="1" fill="#7080a8" />
<rect x="294" y="115" width="1" height="1" fill="#7080a8" />
<rect x="294" y="119" width="1" height="1" fill="#7080a8" />
<rect x="296" y="109" width="1" height="1" fill="#7080a8" />
<rect x="296" y="113" width="1" height="1" fill="#7080a8" />
<rect x="296" y="117" width="1" height="1" fill="#7080a8" />
<rect x="298" y="107" width="1" height="1" fill="#7080a8" />
<rect x="298" y="111" width="1" height="1" fill="#7080a8" />
<rect x="298" y="115" width="1" height="1" fill="#7080a8" />
<rect x="298" y="119" width="1" height="1" fill="#7080a8" />
<rect x="300" y="109" width="1" height="1" fill="#7080a8" />
<rect x="300" y="113" width="1" height="1" fill="#7080a8" />
<rect x="300" y="117" width="1" height="1" fill="#7080a8" />
<path d="M305.5,106.5h14v14h-14z" fill="#7a90c0" stroke="#50608a" stroke-width="1" />
<path d="M308,109v8M309,113l4,-4v8zM314,113l4,-4v8z" fill="#fff" stroke="#fff" stroke-width="0.8" />
<rect x="322" y="103" width="1" height="19" fill="#9a9a9a" />
<rect x="323" y="103" width="1" height="19" fill="#fdfdfd" />
<path d="M331.5,106.5h12v6h-12z" fill="#7a90c0" stroke="#50608a" stroke-width="1" />
<path d="M336,108v4l3,-2z" fill="#fff" />
<rect x="338" y="117" width="1" height="2" fill="#303030" />
<path d="M349.5,106.5h12v6h-12z" fill="#7a90c0" stroke="#50608a" stroke-width="1" />
<path d="M354,108v4l3,-2z" fill="#fff" />
<rect x="352" y="114" width="1" height="6" fill="#404040" />
<rect x="355" y="114" width="1" height="6" fill="#404040" />
<rect x="358" y="114" width="1" height="6" fill="#404040" />
<path d="M368.5,106.5h12v6h-12z" fill="#7a90c0" stroke="#50608a" stroke-width="1" />
<path d="M373,108v4l3,-2z" fill="#fff" />
<rect x="369" y="116" width="5" height="1" fill="#303030" />
<rect x="376" y="114" width="1" height="6" fill="#404040" />
<rect x="379" y="114" width="1" height="6" fill="#404040" />
<rect x="384" y="103" width="1" height="19" fill="#9a9a9a" />
<rect x="385" y="103" width="1" height="19" fill="#fdfdfd" />
<rect x="392" y="111" width="1" height="1" fill="#b84040" />
<rect x="392" y="113" width="1" height="1" fill="#b84040" />
<rect x="392" y="115" width="1" height="1" fill="#b84040" />
<rect x="393" y="110" width="1" height="1" fill="#b84040" />
<rect x="393" y="112" width="1" height="1" fill="#b84040" />
<rect x="393" y="114" width="1" height="1" fill="#b84040" />
<rect x="393" y="116" width="1" height="1" fill="#b84040" />
<rect x="394" y="109" width="1" height="1" fill="#b84040" />
<rect x="394" y="111" width="1" height="1" fill="#b84040" />
<rect x="394" y="113" width="1" height="1" fill="#b84040" />
<rect x="394" y="115" width="1" height="1" fill="#b84040" />
<rect x="394" y="117" width="1" height="1" fill="#b84040" />
<rect x="395" y="108" width="1" height="1" fill="#b84040" />
<rect x="395" y="110" width="1" height="1" fill="#b84040" />
<rect x="395" y="112" width="1" height="1" fill="#b84040" />
<rect x="395" y="114" width="1" height="1" fill="#b84040" />
<rect x="395" y="116" width="1" height="1" fill="#b84040" />
<rect x="395" y="118" width="1" height="1" fill="#b84040" />
<rect x="396" y="107" width="1" height="1" fill="#b84040" />
<rect x="396" y="109" width="1" height="1" fill="#b84040" />
<rect x="396" y="111" width="1" height="1" fill="#b84040" />
<rect x="396" y="113" width="1" height="1" fill="#b84040" />
<rect x="396" y="115" width="1" height="1" fill="#b84040" />
<rect x="396" y="117" width="1" height="1" fill="#b84040" />
<rect x="396" y="119" width="1" height="1" fill="#b84040" />
<rect x="397" y="108" width="1" height="1" fill="#b84040" />
<rect x="397" y="110" width="1" height="1" fill="#b84040" />
<rect x="397" y="112" width="1" height="1" fill="#b84040" />
<rect x="397" y="114" width="1" height="1" fill="#b84040" />
<rect x="397" y="116" width="1" height="1" fill="#b84040" />
<rect x="397" y="118" width="1" height="1" fill="#b84040" />
<rect x="398" y="107" width="1" height="1" fill="#b84040" />
<rect x="398" y="109" width="1" height="1" fill="#b84040" />
<rect x="398" y="111" width="1" height="1" fill="#b84040" />
<rect x="398" y="113" width="1" height="1" fill="#b84040" />
<rect x="398" y="115" width="1" height="1" fill="#b84040" />
<rect x="398" y="117" width="1" height="1" fill="#b84040" />
<rect x="398" y="119" width="1" height="1" fill="#b84040" />
<rect x="399" y="108" width="1" height="1" fill="#b84040" />
<rect x="399" y="110" width="1" height="1" fill="#b84040" />
<rect x="399" y="112" width="1" height="1" fill="#b84040" />
<rect x="399" y="114" width="1" height="1" fill="#b84040" />
<rect x="399" y="116" width="1" height="1" fill="#b84040" />
<rect x="399" y="118" width="1" height="1" fill="#b84040" />
<rect x="400" y="107" width="1" height="1" fill="#b84040" />
<rect x="400" y="109" width="1" height="1" fill="#b84040" />
<rect x="400" y="111" width="1" height="1" fill="#b84040" />
<rect x="400" y="113" width="1" height="1" fill="#b84040" />
<rect x="400" y="115" width="1" height="1" fill="#b84040" />
<rect x="400" y="117" width="1" height="1" fill="#b84040" />
<rect x="400" y="119" width="1" height="1" fill="#b84040" />
<rect x="401" y="108" width="1" height="1" fill="#b84040" />
<rect x="401" y="110" width="1" height="1" fill="#b84040" />
<rect x="401" y="112" width="1" height="1" fill="#b84040" />
<rect x="401" y="114" width="1" height="1" fill="#b84040" />
<rect x="401" y="116" width="1" height="1" fill="#b84040" />
<rect x="401" y="118" width="1" height="1" fill="#b84040" />
<rect x="402" y="109" width="1" height="1" fill="#b84040" />
<rect x="402" y="111" width="1" height="1" fill="#b84040" />
<rect x="402" y="113" width="1" height="1" fill="#b84040" />
<rect x="402" y="115" width="1" height="1" fill="#b84040" />
<rect x="402" y="117" width="1" height="1" fill="#b84040" />
<rect x="403" y="110" width="1" height="1" fill="#b84040" />
<rect x="403" y="112" width="1" height="1" fill="#b84040" />
<rect x="403" y="114" width="1" height="1" fill="#b84040" />
<rect x="403" y="116" width="1" height="1" fill="#b84040" />
<rect x="404" y="111" width="1" height="1" fill="#b84040" />
<rect x="404" y="113" width="1" height="1" fill="#b84040" />
<rect x="404" y="115" width="1" height="1" fill="#b84040" />
<path d="M409.5,107.5h11v9h-11z" fill="#d8d8d8" stroke="#808080" stroke-width="1" />
<rect x="412" y="108" width="1" height="8" fill="#909090" />
<rect x="415" y="108" width="1" height="8" fill="#909090" />
<path d="M420,117m-4,0a4,4 0 1,0 8,0a4,4 0 1,0 -8,0" fill="#d02020" />
<rect x="427" y="103" width="1" height="19" fill="#9a9a9a" />
<rect x="428" y="103" width="1" height="19" fill="#fdfdfd" />
<path d="M434.5,107.5h14v11h-14z" fill="#505850" stroke="#404040" stroke-width="1" />
<rect x="436" y="110" width="10" height="5" fill="#30a030" />
<path d="M451.5,113m-5,0a5,5 0 1,0 10,0a5,5 0 1,0 -10,0" fill="#e0e8f0" stroke="#4a5a80" stroke-width="1.5" />
<path d="M451.5,110v3h2" fill="none" stroke="#203050" stroke-width="1" />
<text x="459.5" y="117" font-size="10.5" fill="#000" textLength="60" lengthAdjust="spacingAndGlyphs">102,440ns + 1</text>
<rect x="976" y="100" width="1" height="24" fill="#9a9a9a" />
<rect x="977" y="100" width="1" height="24" fill="#fdfdfd" />
<rect x="980" y="103" width="1" height="20" fill="#9a9a9a" />
<text x="986" y="117" font-size="10.5" fill="#000" textLength="21" lengthAdjust="spacingAndGlyphs">Time:</text>
<path d="M1016,104h2v9h3v-5h-3z" fill="#707070" />
<rect x="1016" y="114" width="3" height="4" fill="#707070" />
<path d="M1022.5,108.5h10v9h-10z" fill="#c8c8c8" stroke="#707070" stroke-width="1" />
<rect x="1021" y="106" width="10" height="2" fill="#909090" />
<rect x="1037" y="106" width="86" height="14" fill="#fff" />
<rect x="1037" y="106" width="86" height="2" fill="#8a8a8a" />
<rect x="1037" y="106" width="2" height="14" fill="#8a8a8a" />
<rect x="1037" y="119" width="86" height="1" fill="#f4f4f4" />
<rect x="1110" y="108" width="10" height="10" fill="#d4d4d4" />
<rect x="1110" y="117" width="10" height="1" fill="#8a8a8a" />
<rect x="1119" y="108" width="1" height="10" fill="#8a8a8a" />
<path d="M1112,111.5h6l-3,4z" fill="#000" />
<text x="1039" y="117.5" font-size="10.5" fill="#000" textLength="69" lengthAdjust="spacingAndGlyphs">99,560ns : 102,4</text>
<path d="M1133,111m-6,0a6,6 0 1,0 12,0a6,6 0 1,0 -12,0" fill="#a8c0e0" stroke="#5070a0" stroke-width="1.2" />
<path d="M1138,115l4,4" fill="none" stroke="#b07020" stroke-width="2.5" />
<path d="M1126,120h3v-2h3v2h3" fill="none" stroke="#30b030" stroke-width="1" />
<text x="1149" y="113" font-size="11" fill="#000" font-weight="bold" textLength="7" lengthAdjust="spacingAndGlyphs">+</text>
<rect x="1149" y="118" width="6" height="3" fill="#30a030" />
<rect x="1162" y="107" width="7" height="2" fill="#000" />
<path d="M1161,120l2,-2 2,2 2,-2 2,2" fill="none" stroke="#40c040" stroke-width="1" />
<rect x="1174" y="105" width="7" height="2" fill="#000" />
<rect x="1174" y="109" width="7" height="2" fill="#000" />
<rect x="1174" y="117" width="6" height="4" fill="#202020" />
<path d="M1186.5,105v8M1186.5,105h7v4h-7M1193.5,105v8" fill="none" stroke="#c04040" stroke-width="1.2" />
<rect x="1" y="126" width="4" height="500" fill="#e6e6e6" />
<rect x="5" y="126" width="22" height="500" fill="#a8a8a8" />
<rect x="2" y="126" width="25" height="16" fill="#8a8a8a" />
<path d="M6,130l6,6M12,130l-6,6" fill="none" stroke="#e8e8e8" stroke-width="1.5" />
<path d="M21,133m-4.5,0a4.5,4.5 0 1,0 9,0a4.5,4.5 0 1,0 -9,0" fill="none" stroke="#d8d8d8" stroke-width="1" />
<path d="M20,130v6l3,-3z" fill="#d8d8d8" />
<rect x="2" y="142" width="23" height="26" fill="#e8e8e8" />
<path d="M21.5,142.5l3,3v22" fill="none" stroke="#303030" stroke-width="1" />
<rect x="3" y="168" width="22" height="1" fill="#303030" />
<rect x="3" y="146" width="1" height="2" fill="#606060" />
<rect x="3" y="150" width="1" height="2" fill="#606060" />
<rect x="3" y="154" width="1" height="2" fill="#606060" />
<rect x="3" y="158" width="1" height="2" fill="#606060" />
<rect x="3" y="162" width="1" height="2" fill="#606060" />
<rect x="5" y="168" width="1" height="454" fill="#2a2a2a" />
<path d="M5.5,621q0,2 -3,3" fill="none" stroke="#2a2a2a" stroke-width="1.2" />
<rect x="6" y="171" width="17" height="19" fill="#e8e8e8" />
<path d="M6,171.5h15l2,2V189.5H6" fill="none" stroke="#1a1a1a" stroke-width="1" />
<rect x="6" y="192" width="17" height="20" fill="#e8e8e8" />
<path d="M6,192.5h15l2,2V211.5H6" fill="none" stroke="#1a1a1a" stroke-width="1" />
<rect x="6" y="214" width="17" height="20" fill="#e8e8e8" />
<path d="M6,214.5h15l2,2V233.5H6" fill="none" stroke="#1a1a1a" stroke-width="1" />
<rect x="6" y="236" width="17" height="21" fill="#e8e8e8" />
<path d="M6,236.5h15l2,2V256.5H6" fill="none" stroke="#1a1a1a" stroke-width="1" />
<rect x="6" y="259" width="17" height="21" fill="#e8e8e8" />
<path d="M6,259.5h15l2,2V279.5H6" fill="none" stroke="#1a1a1a" stroke-width="1" />
<path d="M10.5,148.5h4v4h-4zM10.5,154.5h4v4h-4zM16.5,154.5h4v4h-4z" fill="#e8e8f0" stroke="#606070" stroke-width="1" />
<rect x="12" y="152" width="1" height="3" fill="#606070" />
<rect x="14" y="156" width="3" height="1" fill="#606070" />
<path d="M19,159l3,3" fill="none" stroke="#c0a020" stroke-width="2" />
<path d="M13.5,173.5h4v3h-4z" fill="#e8e8e8" stroke="#505050" stroke-width="1" />
<rect x="15" y="176" width="1" height="2" fill="#505050" />
<rect x="9" y="179" width="3" height="5" fill="#505050" />
<rect x="13" y="178" width="3" height="6" fill="#505050" />
<rect x="17" y="178" width="4" height="7" fill="#909090" />
<rect x="18" y="179" width="2" height="2" fill="#f0f0f0" />
<rect x="18" y="182" width="2" height="2" fill="#f0f0f0" />
<rect x="10" y="180" width="1" height="2" fill="#a0a0a0" />
<path d="M9.5,197.5h5v8h-5z" fill="#e8ecf8" stroke="#5a6890" stroke-width="1" />
<rect x="11" y="200" width="2" height="2" fill="#404860" />
<rect x="10" y="196" width="3" height="1" fill="#5a6890" />
<rect x="10" y="206" width="3" height="1" fill="#5a6890" />
<path d="M15,200h2v2h-2z" fill="#5a6890" />
<path d="M17.5,198.5h3v6h-3z" fill="#5a6890" stroke="#404860" stroke-width="1" />
<rect x="21" y="199" width="1" height="1" fill="#404860" />
<rect x="21" y="203" width="1" height="1" fill="#404860" />
<rect x="9" y="219" width="4" height="1" fill="#404040" />
<rect x="9" y="222" width="4" height="1" fill="#404040" />
<rect x="9" y="225" width="4" height="1" fill="#404040" />
<path d="M13.5,218.5h6v8h-6z" fill="#606060" stroke="#303030" stroke-width="1" />
<rect x="20" y="221" width="2" height="3" fill="#404040" />
<rect x="8" y="240" width="5" height="4" fill="#30a040" />
<rect x="15" y="240" width="5" height="4" fill="#30a040" />
<rect x="9" y="241" width="3" height="1" fill="#90e090" />
<rect x="16" y="241" width="3" height="1" fill="#90e090" />
<rect x="12" y="244" width="4" height="2" fill="#30a040" />
<path d="M14,249m-3,0a3,3 0 1,0 6,0a3,3 0 1,0 -6,0" fill="#8090c0" stroke="#404870" stroke-width="1" />
<rect x="8" y="262" width="2" height="8" fill="#c03030" />
<rect x="19" y="262" width="2" height="8" fill="#c03030" />
<path d="M11,263l3,3 3,-3M11,269l3,-3 3,3" fill="none" stroke="#4060b0" stroke-width="1.2" />
<path d="M8,272v3h4v-3h4v3h4v-3" fill="none" stroke="#30a040" stroke-width="1.5" />
<rect x="28" y="126" width="203" height="36" fill="#e6e6e6" />
<path d="M36.5,136.5m-4,0a4,4 0 1,0 8,0a4,4 0 1,0 -8,0" fill="#c0c8d8" stroke="#5a6070" stroke-width="1" />
<rect x="35" y="134" width="3" height="3" fill="#d02020" />
<rect x="39" y="140" width="2" height="2" fill="#e0a000" />
<rect x="32" y="143" width="9" height="1" fill="#707070" />
<path d="M32,147v7M32,147h4v3h-4M37,147v7M37,147h4v3h-4" fill="none" stroke="#c03030" stroke-width="1.2" />
<rect x="32" y="156" width="9" height="1" fill="#707070" />
<text x="75" y="142" font-size="10.5" fill="#000" textLength="56" lengthAdjust="spacingAndGlyphs">Baseline ▾ = 0</text>
<text x="42.5" y="154" font-size="10.5" fill="#000" textLength="123" lengthAdjust="spacingAndGlyphs">Cursor-Baseline ▾ = 102,314ns</text>
<rect x="28" y="162" width="203" height="464" fill="#e6e6e6" />
<rect x="30" y="162" width="134" height="14" fill="#b6b6b6" />
<rect x="30" y="162" width="134" height="1" fill="#9c9c9c" />
<rect x="30" y="175" width="134" height="1" fill="#d0d0d0" />
<text x="32" y="173" font-size="10.5" fill="#000" textLength="22" lengthAdjust="spacingAndGlyphs">Name</text>
<path d="M152,168m-3,0a3,3 0 1,0 6,0a3,3 0 1,0 -6,0" fill="#202020" />
<path d="M156,166h5l-2.5,3z" fill="#000" />
<rect x="30" y="176" width="134" height="434" fill="#000" />
<rect x="30" y="227" width="134" height="50" fill="#383838" />
<rect x="41" y="277" width="123" height="1" fill="#c00000" />
<rect x="41" y="276" width="4" height="2" fill="#e00000" />
<rect x="37" y="186" width="1" height="1" fill="#d0d0d0" />
<rect x="37" y="188" width="1" height="1" fill="#d0d0d0" />
<rect x="37" y="190" width="1" height="1" fill="#d0d0d0" />
<rect x="37" y="192" width="1" height="1" fill="#d0d0d0" />
<rect x="37" y="194" width="1" height="1" fill="#d0d0d0" />
<rect x="37" y="196" width="1" height="1" fill="#d0d0d0" />
<rect x="37" y="198" width="1" height="1" fill="#d0d0d0" />
<rect x="37" y="200" width="1" height="1" fill="#d0d0d0" />
<rect x="37" y="202" width="1" height="1" fill="#d0d0d0" />
<rect x="37" y="204" width="1" height="1" fill="#d0d0d0" />
<rect x="37" y="206" width="1" height="1" fill="#d0d0d0" />
<rect x="37" y="208" width="1" height="1" fill="#d0d0d0" />
<rect x="37" y="210" width="1" height="1" fill="#d0d0d0" />
<rect x="37" y="212" width="1" height="1" fill="#d0d0d0" />
<rect x="37" y="214" width="1" height="1" fill="#d0d0d0" />
<rect x="37" y="216" width="1" height="1" fill="#d0d0d0" />
<rect x="37" y="218" width="1" height="1" fill="#d0d0d0" />
<rect x="37" y="220" width="1" height="1" fill="#d0d0d0" />
<rect x="37" y="222" width="1" height="1" fill="#d0d0d0" />
<rect x="37" y="224" width="1" height="1" fill="#d0d0d0" />
<rect x="37" y="226" width="1" height="1" fill="#d0d0d0" />
<rect x="37" y="228" width="1" height="1" fill="#d0d0d0" />
<rect x="37" y="230" width="1" height="1" fill="#d0d0d0" />
<rect x="37" y="232" width="1" height="1" fill="#d0d0d0" />
<rect x="37" y="234" width="1" height="1" fill="#d0d0d0" />
<rect x="37" y="236" width="1" height="1" fill="#d0d0d0" />
<rect x="37" y="238" width="1" height="1" fill="#d0d0d0" />
<rect x="37" y="240" width="1" height="1" fill="#d0d0d0" />
<rect x="37" y="242" width="1" height="1" fill="#d0d0d0" />
<rect x="37" y="244" width="1" height="1" fill="#d0d0d0" />
<rect x="37" y="246" width="1" height="1" fill="#d0d0d0" />
<rect x="37" y="248" width="1" height="1" fill="#d0d0d0" />
<rect x="37" y="250" width="1" height="1" fill="#d0d0d0" />
<rect x="37" y="252" width="1" height="1" fill="#d0d0d0" />
<rect x="37" y="254" width="1" height="1" fill="#d0d0d0" />
<rect x="37" y="256" width="1" height="1" fill="#d0d0d0" />
<rect x="37" y="258" width="1" height="1" fill="#d0d0d0" />
<rect x="37" y="260" width="1" height="1" fill="#d0d0d0" />
<rect x="37" y="262" width="1" height="1" fill="#d0d0d0" />
<rect x="37" y="264" width="1" height="1" fill="#d0d0d0" />
<rect x="37" y="266" width="1" height="1" fill="#d0d0d0" />
<rect x="37" y="268" width="1" height="1" fill="#d0d0d0" />
<rect x="38" y="185" width="1" height="1" fill="#d0d0d0" />
<rect x="40" y="185" width="1" height="1" fill="#d0d0d0" />
<rect x="42" y="185" width="1" height="1" fill="#d0d0d0" />
<rect x="44" y="185" width="1" height="1" fill="#d0d0d0" />
<rect x="46" y="185" width="1" height="1" fill="#d0d0d0" />
<rect x="38" y="218" width="1" height="1" fill="#d0d0d0" />
<rect x="40" y="218" width="1" height="1" fill="#d0d0d0" />
<rect x="42" y="218" width="1" height="1" fill="#d0d0d0" />
<rect x="44" y="218" width="1" height="1" fill="#d0d0d0" />
<rect x="46" y="218" width="1" height="1" fill="#d0d0d0" />
<rect x="38" y="235" width="1" height="1" fill="#d0d0d0" />
<rect x="40" y="235" width="1" height="1" fill="#d0d0d0" />
<rect x="42" y="235" width="1" height="1" fill="#d0d0d0" />
<rect x="44" y="235" width="1" height="1" fill="#d0d0d0" />
<rect x="46" y="235" width="1" height="1" fill="#d0d0d0" />
<rect x="38" y="252" width="1" height="1" fill="#d0d0d0" />
<rect x="40" y="252" width="1" height="1" fill="#d0d0d0" />
<rect x="42" y="252" width="1" height="1" fill="#d0d0d0" />
<rect x="44" y="252" width="1" height="1" fill="#d0d0d0" />
<rect x="46" y="252" width="1" height="1" fill="#d0d0d0" />
<rect x="38" y="269" width="1" height="1" fill="#d0d0d0" />
<rect x="40" y="269" width="1" height="1" fill="#d0d0d0" />
<rect x="42" y="269" width="1" height="1" fill="#d0d0d0" />
<rect x="44" y="269" width="1" height="1" fill="#d0d0d0" />
<rect x="46" y="269" width="1" height="1" fill="#d0d0d0" />
<path d="M34.5,231.5h7v7h-7z" fill="#383838" stroke="#e0e0e0" stroke-width="1" />
<rect x="36" y="235" width="5" height="1" fill="#e0e0e0" />
<rect x="38" y="233" width="1" height="5" fill="#e0e0e0" />
<path d="M34.5,265.5h7v7h-7z" fill="#383838" stroke="#e0e0e0" stroke-width="1" />
<rect x="36" y="269" width="5" height="1" fill="#e0e0e0" />
<rect x="38" y="267" width="1" height="5" fill="#e0e0e0" />
<path d="M54.5,181.5h8v7h-8z" fill="#8a9ac8" stroke="#5a6a90" stroke-width="1" />
<rect x="56" y="182" width="6" height="1" fill="#dde" />
<path d="M48,184h4v-2l4,3 -4,3v-2h-4z" fill="#f0e000" stroke="#a09000" stroke-width="0.6" />
<path d="M54.5,198.5h8v7h-8z" fill="#8a9ac8" stroke="#5a6a90" stroke-width="1" />
<rect x="56" y="199" width="6" height="1" fill="#dde" />
<path d="M48,201h4v-2l4,3 -4,3v-2h-4z" fill="#f0e000" stroke="#a09000" stroke-width="0.6" />
<path d="M54.5,215.5h8v7h-8z" fill="#8a9ac8" stroke="#5a6a90" stroke-width="1" />
<rect x="56" y="216" width="6" height="1" fill="#dde" />
<path d="M48,218h4v-2l4,3 -4,3v-2h-4z" fill="#f0e000" stroke="#a09000" stroke-width="0.6" />
<path d="M52.5,232.5h8v7h-8z" fill="#8a9ac8" stroke="#5a6a90" stroke-width="1" />
<rect x="54" y="233" width="6" height="1" fill="#dde" />
<path d="M46,235h4v-2l4,3 -4,3v-2h-4z" fill="#f0e000" stroke="#a09000" stroke-width="0.6" />
<path d="M56.5,230.5h6v6h-6z" fill="#a0b0d8" stroke="#5a6a90" stroke-width="1" />
<path d="M48.5,249.5h8v7h-8z" fill="#8a9ac8" stroke="#5a6a90" stroke-width="1" />
<path d="M54,252h4v-2l4,3 -4,3v-2h-4z" fill="#f0e000" stroke="#a09000" stroke-width="0.6" />
<path d="M49.5,266.5h8v7h-8z" fill="#8a9ac8" stroke="#5a6a90" stroke-width="1" />
<path d="M55,269h4v-2l4,3 -4,3v-2h-4z" fill="#f0e000" stroke="#a09000" stroke-width="0.6" />
<path d="M48.5,263.5h6v6h-6z" fill="#a0b0d8" stroke="#5a6a90" stroke-width="1" />
<text x="65.5" y="189" font-size="10" fill="#fff" textLength="12" lengthAdjust="spacingAndGlyphs">clk</text>
<text x="65.5" y="206" font-size="10" fill="#fff" textLength="22" lengthAdjust="spacingAndGlyphs">reset</text>
<text x="65.5" y="223" font-size="10" fill="#fff" textLength="46" lengthAdjust="spacingAndGlyphs">clk_enable</text>
<text x="65.5" y="240" font-size="10" fill="#fff" textLength="25" lengthAdjust="spacingAndGlyphs">d[1:0]</text>
<text x="65.5" y="257" font-size="10" fill="#fff" textLength="27" lengthAdjust="spacingAndGlyphs">cs_out</text>
<text x="65.5" y="274" font-size="10" fill="#fff" textLength="39" lengthAdjust="spacingAndGlyphs">Out[15:0]</text>
<rect x="30" y="610" width="134" height="16" fill="#c4c4c4" />
<path d="M42,612v11l-9,-5.5z" fill="#e8e8e8" stroke="#b0b0b0" stroke-width="1" />
<rect x="45" y="611" width="104" height="14" fill="#e6e6e6" />
<rect x="45" y="611" width="104" height="1" fill="#fafafa" />
<rect x="148" y="611" width="1" height="14" fill="#a0a0a0" />
<rect x="45" y="624" width="104" height="1" fill="#a0a0a0" />
<rect x="45" y="611" width="1" height="14" fill="#fafafa" />
<path d="M152,612v11l9,-5.5z" fill="#e8e8e8" stroke="#b0b0b0" stroke-width="1" />
<rect x="169" y="162" width="57" height="14" fill="#b6b6b6" />
<rect x="169" y="162" width="57" height="1" fill="#9c9c9c" />
<rect x="169" y="175" width="57" height="1" fill="#d0d0d0" />
<text x="171" y="173" font-size="10.5" fill="#000" textLength="27" lengthAdjust="spacingAndGlyphs">Cursor</text>
<path d="M214,168m-3,0a3,3 0 1,0 6,0a3,3 0 1,0 -6,0" fill="#202020" />
<path d="M218,166h5l-2.5,3z" fill="#000" />
<rect x="169" y="176" width="57" height="434" fill="#000" />
<rect x="169" y="227" width="57" height="50" fill="#383838" />
<text x="170.5" y="189" font-size="10" fill="#fff" textLength="5" lengthAdjust="spacingAndGlyphs">0</text>
<text x="170.5" y="206" font-size="10" fill="#fff" textLength="5" lengthAdjust="spacingAndGlyphs">0</text>
<text x="170.5" y="223" font-size="10" fill="#fff" textLength="4" lengthAdjust="spacingAndGlyphs">1</text>
<text x="170.5" y="240" font-size="10" fill="#fff" textLength="15" lengthAdjust="spacingAndGlyphs">'d 2</text>
<text x="170.5" y="257" font-size="10" fill="#fff" textLength="5" lengthAdjust="spacingAndGlyphs">0</text>
<text x="170.5" y="274" font-size="10" fill="#fff" textLength="37" lengthAdjust="spacingAndGlyphs">-'d 4174</text>
<rect x="169" y="610" width="44" height="16" fill="#c4c4c4" />
<path d="M180,612v11l-9,-5.5z" fill="#e8e8e8" stroke="#b0b0b0" stroke-width="1" />
<rect x="183" y="611" width="14" height="14" fill="#e6e6e6" />
<rect x="196" y="611" width="1" height="14" fill="#a0a0a0" />
<rect x="183" y="624" width="14" height="1" fill="#a0a0a0" />
<path d="M199,612v11l9,-5.5z" fill="#e8e8e8" stroke="#b0b0b0" stroke-width="1" />
<rect x="213" y="610" width="13" height="16" fill="#ececec" />
<rect x="216" y="615" width="1" height="7" fill="#000" />
<rect x="218" y="616" width="5" height="1" fill="#000" />
<rect x="218" y="619" width="5" height="1" fill="#000" />
<g shape-rendering="crispEdges"><svg x="231" y="126" width="958" height="484" viewBox="231 126 958 484"><rect x="231" y="126" width="958" height="484" fill="#000"/><rect x="231" y="227" width="958" height="51" fill="#383838"/><rect x="244" y="163" width="1" height="12" fill="#fff"/><rect x="277" y="173" width="1" height="2" fill="#fff"/><text x="246" y="172" font-size="10" fill="#fff" textLength="36.8" lengthAdjust="spacingAndGlyphs">99,600ns</text><rect x="311" y="163" width="1" height="12" fill="#fff"/><rect x="344" y="173" width="1" height="2" fill="#fff"/><text x="313" y="172" font-size="10" fill="#fff" textLength="36.8" lengthAdjust="spacingAndGlyphs">99,800ns</text><rect x="377" y="163" width="1" height="12" fill="#fff"/><rect x="410" y="173" width="1" height="2" fill="#fff"/><text x="379" y="172" font-size="10" fill="#fff" textLength="41.4" lengthAdjust="spacingAndGlyphs">100,000ns</text><rect x="444" y="163" width="1" height="12" fill="#fff"/><rect x="477" y="173" width="1" height="2" fill="#fff"/><text x="446" y="172" font-size="10" fill="#fff" textLength="41.4" lengthAdjust="spacingAndGlyphs">100,200ns</text><rect x="510" y="163" width="1" height="12" fill="#fff"/><rect x="543" y="173" width="1" height="2" fill="#fff"/><text x="512" y="172" font-size="10" fill="#fff" textLength="41.4" lengthAdjust="spacingAndGlyphs">100,400ns</text><rect x="577" y="163" width="1" height="12" fill="#fff"/><rect x="610" y="173" width="1" height="2" fill="#fff"/><text x="579" y="172" font-size="10" fill="#fff" textLength="41.4" lengthAdjust="spacingAndGlyphs">100,600ns</text><rect x="643" y="163" width="1" height="12" fill="#fff"/><rect x="676" y="173" width="1" height="2" fill="#fff"/><text x="645" y="172" font-size="10" fill="#fff" textLength="41.4" lengthAdjust="spacingAndGlyphs">100,800ns</text><text x="712" y="172" font-size="10" fill="#fff" textLength="41.4" lengthAdjust="spacingAndGlyphs">101,000ns</text><text x="778" y="172" font-size="10" fill="#fff" textLength="41.4" lengthAdjust="spacingAndGlyphs">101,200ns</text><rect x="842" y="163" width="1" height="12" fill="#fff"/><rect x="876" y="173" width="1" height="2" fill="#fff"/><text x="844" y="172" font-size="10" fill="#fff" textLength="41.4" lengthAdjust="spacingAndGlyphs">101,400ns</text><rect x="909" y="163" width="1" height="12" fill="#fff"/><rect x="942" y="173" width="1" height="2" fill="#fff"/><text x="911" y="172" font-size="10" fill="#fff" textLength="41.4" lengthAdjust="spacingAndGlyphs">101,600ns</text><rect x="975" y="163" width="1" height="12" fill="#fff"/><rect x="1009" y="173" width="1" height="2" fill="#fff"/><text x="977" y="172" font-size="10" fill="#fff" textLength="41.4" lengthAdjust="spacingAndGlyphs">101,800ns</text><rect x="1042" y="163" width="1" height="12" fill="#fff"/><rect x="1075" y="173" width="1" height="2" fill="#fff"/><text x="1044" y="172" font-size="10" fill="#fff" textLength="41.4" lengthAdjust="spacingAndGlyphs">102,000ns</text><rect x="1108" y="163" width="1" height="12" fill="#fff"/><rect x="1142" y="173" width="1" height="2" fill="#fff"/><text x="1110" y="172" font-size="10" fill="#fff" textLength="41.4" lengthAdjust="spacingAndGlyphs">102,200ns</text><text x="1176" y="172" font-size="10" fill="#fff">1</text><path d="M1182,165v5l4,-2.5z" fill="#fff"/><path d="M224,178h1v14h-1zM224,178h2v1h-2zM226,178h1v14h-1zM226,191h2v1h-2zM228,178h1v14h-1zM228,178h1v1h-1zM229,178h1v14h-1zM229,191h2v1h-2zM231,178h1v14h-1zM231,178h2v1h-2zM233,178h1v14h-1zM233,191h1v1h-1zM234,178h1v14h-1zM234,178h2v1h-2zM236,178h1v14h-1zM236,191h2v1h-2zM238,178h1v14h-1zM238,178h1v1h-1zM239,178h1v14h-1zM239,191h2v1h-2zM241,178h1v14h-1zM241,178h2v1h-2zM243,178h1v14h-1zM243,191h1v1h-1zM244,178h1v14h-1zM244,178h2v1h-2zM246,178h1v14h-1zM246,191h2v1h-2zM248,178h1v14h-1zM248,178h1v1h-1zM249,178h1v14h-1zM249,191h2v1h-2zM251,178h1v14h-1zM251,178h2v1h-2zM253,178h1v14h-1zM253,191h1v1h-1zM254,178h1v14h-1zM254,178h2v1h-2zM256,178h1v14h-1zM256,191h1v1h-1zM257,178h1v14h-1zM257,178h2v1h-2zM259,178h1v14h-1zM259,191h2v1h-2zM261,178h1v14h-1zM261,178h1v1h-1zM262,178h1v14h-1zM262,191h2v1h-2zM264,178h1v14h-1zM264,178h2v1h-2zM266,178h1v14h-1zM266,191h1v1h-1zM267,178h1v14h-1zM267,178h2v1h-2zM269,178h1v14h-1zM269,191h2v1h-2zM271,178h1v14h-1zM271,178h1v1h-1zM272,178h1v14h-1zM272,191h2v1h-2zM274,178h1v14h-1zM274,178h2v1h-2zM276,178h1v14h-1zM276,191h1v1h-1zM277,178h1v14h-1zM277,178h2v1h-2zM279,178h1v14h-1zM279,191h2v1h-2zM281,178h1v14h-1zM281,178h1v1h-1zM282,178h1v14h-1zM282,191h2v1h-2zM284,178h1v14h-1zM284,178h2v1h-2zM286,178h1v14h-1zM286,191h1v1h-1zM287,178h1v14h-1zM287,178h2v1h-2zM289,178h1v14h-1zM289,191h2v1h-2zM291,178h1v14h-1zM291,178h1v1h-1zM292,178h1v14h-1zM292,191h2v1h-2zM294,178h1v14h-1zM294,178h2v1h-2zM296,178h1v14h-1zM296,191h1v1h-1zM297,178h1v14h-1zM297,178h2v1h-2zM299,178h1v14h-1zM299,191h2v1h-2zM301,178h1v14h-1zM301,178h1v1h-1zM302,178h1v14h-1zM302,191h2v1h-2zM304,178h1v14h-1zM304,178h2v1h-2zM306,178h1v14h-1zM306,191h1v1h-1zM307,178h1v14h-1zM307,178h2v1h-2zM309,178h1v14h-1zM309,191h2v1h-2zM311,178h1v14h-1zM311,178h1v1h-1zM312,178h1v14h-1zM312,191h2v1h-2zM314,178h1v14h-1zM314,178h2v1h-2zM316,178h1v14h-1zM316,191h1v1h-1zM317,178h1v14h-1zM317,178h2v1h-2zM319,178h1v14h-1zM319,191h2v1h-2zM321,178h1v14h-1zM321,178h1v1h-1zM322,178h1v14h-1zM322,191h2v1h-2zM324,178h1v14h-1zM324,178h2v1h-2zM326,178h1v14h-1zM326,191h1v1h-1zM327,178h1v14h-1zM327,178h2v1h-2zM329,178h1v14h-1zM329,191h2v1h-2zM331,178h1v14h-1zM331,178h1v1h-1zM332,178h1v14h-1zM332,191h2v1h-2zM334,178h1v14h-1zM334,178h2v1h-2zM336,178h1v14h-1zM336,191h1v1h-1zM337,178h1v14h-1zM337,178h2v1h-2zM339,178h1v14h-1zM339,191h2v1h-2zM341,178h1v14h-1zM341,178h1v1h-1zM342,178h1v14h-1zM342,191h2v1h-2zM344,178h1v14h-1zM344,178h2v1h-2zM346,178h1v14h-1zM346,191h1v1h-1zM347,178h1v14h-1zM347,178h2v1h-2zM349,178h1v14h-1zM349,191h2v1h-2zM351,178h1v14h-1zM351,178h1v1h-1zM352,178h1v14h-1zM352,191h2v1h-2zM354,178h1v14h-1zM354,178h2v1h-2zM356,178h1v14h-1zM356,191h1v1h-1zM357,178h1v14h-1zM357,178h2v1h-2zM359,178h1v14h-1zM359,191h2v1h-2zM361,178h1v14h-1zM361,178h1v1h-1zM362,178h1v14h-1zM362,191h2v1h-2zM364,178h1v14h-1zM364,178h2v1h-2zM366,178h1v14h-1zM366,191h1v1h-1zM367,178h1v14h-1zM367,178h2v1h-2zM369,178h1v14h-1zM369,191h1v1h-1zM370,178h1v14h-1zM370,178h2v1h-2zM372,178h1v14h-1zM372,191h2v1h-2zM374,178h1v14h-1zM374,178h1v1h-1zM375,178h1v14h-1zM375,191h2v1h-2zM377,178h1v14h-1zM377,178h2v1h-2zM379,178h1v14h-1zM379,191h1v1h-1zM380,178h1v14h-1zM380,178h2v1h-2zM382,178h1v14h-1zM382,191h2v1h-2zM384,178h1v14h-1zM384,178h1v1h-1zM385,178h1v14h-1zM385,191h2v1h-2zM387,178h1v14h-1zM387,178h2v1h-2zM389,178h1v14h-1zM389,191h1v1h-1zM390,178h1v14h-1zM390,178h2v1h-2zM392,178h1v14h-1zM392,191h2v1h-2zM394,178h1v14h-1zM394,178h1v1h-1zM395,178h1v14h-1zM395,191h2v1h-2zM397,178h1v14h-1zM397,178h2v1h-2zM399,178h1v14h-1zM399,191h1v1h-1zM400,178h1v14h-1zM400,178h2v1h-2zM402,178h1v14h-1zM402,191h2v1h-2zM404,178h1v14h-1zM404,178h1v1h-1zM405,178h1v14h-1zM405,191h2v1h-2zM407,178h1v14h-1zM407,178h2v1h-2zM409,178h1v14h-1zM409,191h1v1h-1zM410,178h1v14h-1zM410,178h2v1h-2zM412,178h1v14h-1zM412,191h2v1h-2zM414,178h1v14h-1zM414,178h1v1h-1zM415,178h1v14h-1zM415,191h2v1h-2zM417,178h1v14h-1zM417,178h2v1h-2zM419,178h1v14h-1zM419,191h1v1h-1zM420,178h1v14h-1zM420,178h2v1h-2zM422,178h1v14h-1zM422,191h2v1h-2zM424,178h1v14h-1zM424,178h1v1h-1zM425,178h1v14h-1zM425,191h2v1h-2zM427,178h1v14h-1zM427,178h2v1h-2zM429,178h1v14h-1zM429,191h1v1h-1zM430,178h1v14h-1zM430,178h2v1h-2zM432,178h1v14h-1zM432,191h2v1h-2zM434,178h1v14h-1zM434,178h1v1h-1zM435,178h1v14h-1zM435,191h2v1h-2zM437,178h1v14h-1zM437,178h2v1h-2zM439,178h1v14h-1zM439,191h1v1h-1zM440,178h1v14h-1zM440,178h2v1h-2zM442,178h1v14h-1zM442,191h2v1h-2zM444,178h1v14h-1zM444,178h1v1h-1zM445,178h1v14h-1zM445,191h2v1h-2zM447,178h1v14h-1zM447,178h2v1h-2zM449,178h1v14h-1zM449,191h1v1h-1zM450,178h1v14h-1zM450,178h2v1h-2zM452,178h1v14h-1zM452,191h2v1h-2zM454,178h1v14h-1zM454,178h1v1h-1zM455,178h1v14h-1zM455,191h2v1h-2zM457,178h1v14h-1zM457,178h2v1h-2zM459,178h1v14h-1zM459,191h1v1h-1zM460,178h1v14h-1zM460,178h2v1h-2zM462,178h1v14h-1zM462,191h2v1h-2zM464,178h1v14h-1zM464,178h1v1h-1zM465,178h1v14h-1zM465,191h2v1h-2zM467,178h1v14h-1zM467,178h2v1h-2zM469,178h1v14h-1zM469,191h1v1h-1zM470,178h1v14h-1zM470,178h2v1h-2zM472,178h1v14h-1zM472,191h2v1h-2zM474,178h1v14h-1zM474,178h1v1h-1zM475,178h1v14h-1zM475,191h2v1h-2zM477,178h1v14h-1zM477,178h2v1h-2zM479,178h1v14h-1zM479,191h1v1h-1zM480,178h1v14h-1zM480,178h2v1h-2zM482,178h1v14h-1zM482,191h1v1h-1zM483,178h1v14h-1zM483,178h2v1h-2zM485,178h1v14h-1zM485,191h2v1h-2zM487,178h1v14h-1zM487,178h1v1h-1zM488,178h1v14h-1zM488,191h2v1h-2zM490,178h1v14h-1zM490,178h2v1h-2zM492,178h1v14h-1zM492,191h1v1h-1zM493,178h1v14h-1zM493,178h2v1h-2zM495,178h1v14h-1zM495,191h2v1h-2zM497,178h1v14h-1zM497,178h1v1h-1zM498,178h1v14h-1zM498,191h2v1h-2zM500,178h1v14h-1zM500,178h2v1h-2zM502,178h1v14h-1zM502,191h1v1h-1zM503,178h1v14h-1zM503,178h2v1h-2zM505,178h1v14h-1zM505,191h2v1h-2zM507,178h1v14h-1zM507,178h1v1h-1zM508,178h1v14h-1zM508,191h2v1h-2zM510,178h1v14h-1zM510,178h2v1h-2zM512,178h1v14h-1zM512,191h1v1h-1zM513,178h1v14h-1zM513,178h2v1h-2zM515,178h1v14h-1zM515,191h2v1h-2zM517,178h1v14h-1zM517,178h1v1h-1zM518,178h1v14h-1zM518,191h2v1h-2zM520,178h1v14h-1zM520,178h2v1h-2zM522,178h1v14h-1zM522,191h1v1h-1zM523,178h1v14h-1zM523,178h2v1h-2zM525,178h1v14h-1zM525,191h2v1h-2zM527,178h1v14h-1zM527,178h1v1h-1zM528,178h1v14h-1zM528,191h2v1h-2zM530,178h1v14h-1zM530,178h2v1h-2zM532,178h1v14h-1zM532,191h1v1h-1zM533,178h1v14h-1zM533,178h2v1h-2zM535,178h1v14h-1zM535,191h2v1h-2zM537,178h1v14h-1zM537,178h1v1h-1zM538,178h1v14h-1zM538,191h2v1h-2zM540,178h1v14h-1zM540,178h2v1h-2zM542,178h1v14h-1zM542,191h1v1h-1zM543,178h1v14h-1zM543,178h2v1h-2zM545,178h1v14h-1zM545,191h2v1h-2zM547,178h1v14h-1zM547,178h1v1h-1zM548,178h1v14h-1zM548,191h2v1h-2zM550,178h1v14h-1zM550,178h2v1h-2zM552,178h1v14h-1zM552,191h1v1h-1zM553,178h1v14h-1zM553,178h2v1h-2zM555,178h1v14h-1zM555,191h2v1h-2zM557,178h1v14h-1zM557,178h1v1h-1zM558,178h1v14h-1zM558,191h2v1h-2zM560,178h1v14h-1zM560,178h2v1h-2zM562,178h1v14h-1zM562,191h1v1h-1zM563,178h1v14h-1zM563,178h2v1h-2zM565,178h1v14h-1zM565,191h2v1h-2zM567,178h1v14h-1zM567,178h1v1h-1zM568,178h1v14h-1zM568,191h2v1h-2zM570,178h1v14h-1zM570,178h2v1h-2zM572,178h1v14h-1zM572,191h1v1h-1zM573,178h1v14h-1zM573,178h2v1h-2zM575,178h1v14h-1zM575,191h2v1h-2zM577,178h1v14h-1zM577,178h1v1h-1zM578,178h1v14h-1zM578,191h2v1h-2zM580,178h1v14h-1zM580,178h2v1h-2zM582,178h1v14h-1zM582,191h1v1h-1zM583,178h1v14h-1zM583,178h2v1h-2zM585,178h1v14h-1zM585,191h2v1h-2zM587,178h1v14h-1zM587,178h1v1h-1zM588,178h1v14h-1zM588,191h2v1h-2zM590,178h1v14h-1zM590,178h2v1h-2zM592,178h1v14h-1zM592,191h1v1h-1zM593,178h1v14h-1zM593,178h2v1h-2zM595,178h1v14h-1zM595,191h2v1h-2zM597,178h1v14h-1zM597,178h1v1h-1zM598,178h1v14h-1zM598,191h2v1h-2zM600,178h1v14h-1zM600,178h1v1h-1zM601,178h1v14h-1zM601,191h2v1h-2zM603,178h1v14h-1zM603,178h2v1h-2zM605,178h1v14h-1zM605,191h1v1h-1zM606,178h1v14h-1zM606,178h2v1h-2zM608,178h1v14h-1zM608,191h2v1h-2zM610,178h1v14h-1zM610,178h1v1h-1zM611,178h1v14h-1zM611,191h2v1h-2zM613,178h1v14h-1zM613,178h2v1h-2zM615,178h1v14h-1zM615,191h1v1h-1zM616,178h1v14h-1zM616,178h2v1h-2zM618,178h1v14h-1zM618,191h2v1h-2zM620,178h1v14h-1zM620,178h1v1h-1zM621,178h1v14h-1zM621,191h2v1h-2zM623,178h1v14h-1zM623,178h2v1h-2zM625,178h1v14h-1zM625,191h1v1h-1zM626,178h1v14h-1zM626,178h2v1h-2zM628,178h1v14h-1zM628,191h2v1h-2zM630,178h1v14h-1zM630,178h1v1h-1zM631,178h1v14h-1zM631,191h2v1h-2zM633,178h1v14h-1zM633,178h2v1h-2zM635,178h1v14h-1zM635,191h1v1h-1zM636,178h1v14h-1zM636,178h2v1h-2zM638,178h1v14h-1zM638,191h2v1h-2zM640,178h1v14h-1zM640,178h1v1h-1zM641,178h1v14h-1zM641,191h2v1h-2zM643,178h1v14h-1zM643,178h2v1h-2zM645,178h1v14h-1zM645,191h1v1h-1zM646,178h1v14h-1zM646,178h2v1h-2zM648,178h1v14h-1zM648,191h2v1h-2zM650,178h1v14h-1zM650,178h1v1h-1zM651,178h1v14h-1zM651,191h2v1h-2zM653,178h1v14h-1zM653,178h2v1h-2zM655,178h1v14h-1zM655,191h1v1h-1zM656,178h1v14h-1zM656,178h2v1h-2zM658,178h1v14h-1zM658,191h2v1h-2zM660,178h1v14h-1zM660,178h1v1h-1zM661,178h1v14h-1zM661,191h2v1h-2zM663,178h1v14h-1zM663,178h2v1h-2zM665,178h1v14h-1zM665,191h1v1h-1zM666,178h1v14h-1zM666,178h2v1h-2zM668,178h1v14h-1zM668,191h2v1h-2zM670,178h1v14h-1zM670,178h1v1h-1zM671,178h1v14h-1zM671,191h2v1h-2zM673,178h1v14h-1zM673,178h2v1h-2zM675,178h1v14h-1zM675,191h1v1h-1zM676,178h1v14h-1zM676,178h2v1h-2zM678,178h1v14h-1zM678,191h2v1h-2zM680,178h1v14h-1zM680,178h1v1h-1zM681,178h1v14h-1zM681,191h2v1h-2zM683,178h1v14h-1zM683,178h2v1h-2zM685,178h1v14h-1zM685,191h1v1h-1zM686,178h1v14h-1zM686,178h2v1h-2zM688,178h1v14h-1zM688,191h2v1h-2zM690,178h1v14h-1zM690,178h1v1h-1zM691,178h1v14h-1zM691,191h2v1h-2zM693,178h1v14h-1zM693,178h2v1h-2zM695,178h1v14h-1zM695,191h1v1h-1zM696,178h1v14h-1zM696,178h2v1h-2zM698,178h1v14h-1zM698,191h2v1h-2zM700,178h1v14h-1zM700,178h1v1h-1zM701,178h1v14h-1zM701,191h2v1h-2zM703,178h1v14h-1zM703,178h2v1h-2zM705,178h1v14h-1zM705,191h1v1h-1zM706,178h1v14h-1zM706,178h2v1h-2zM708,178h1v14h-1zM708,191h2v1h-2zM710,178h1v14h-1zM710,178h1v1h-1zM711,178h1v14h-1zM711,191h2v1h-2zM713,178h1v14h-1zM713,178h1v1h-1zM714,178h1v14h-1zM714,191h2v1h-2zM716,178h1v14h-1zM716,178h2v1h-2zM718,178h1v14h-1zM718,191h1v1h-1zM719,178h1v14h-1zM719,178h2v1h-2zM721,178h1v14h-1zM721,191h2v1h-2zM723,178h1v14h-1zM723,178h1v1h-1zM724,178h1v14h-1zM724,191h2v1h-2zM726,178h1v14h-1zM726,178h2v1h-2zM728,178h1v14h-1zM728,191h1v1h-1zM729,178h1v14h-1zM729,178h2v1h-2zM731,178h1v14h-1zM731,191h2v1h-2zM733,178h1v14h-1zM733,178h1v1h-1zM734,178h1v14h-1zM734,191h2v1h-2zM736,178h1v14h-1zM736,178h2v1h-2zM738,178h1v14h-1zM738,191h1v1h-1zM739,178h1v14h-1zM739,178h2v1h-2zM741,178h1v14h-1zM741,191h2v1h-2zM743,178h1v14h-1zM743,178h1v1h-1zM744,178h1v14h-1zM744,191h2v1h-2zM746,178h1v14h-1zM746,178h2v1h-2zM748,178h1v14h-1zM748,191h1v1h-1zM749,178h1v14h-1zM749,178h2v1h-2zM751,178h1v14h-1zM751,191h2v1h-2zM753,178h1v14h-1zM753,178h1v1h-1zM754,178h1v14h-1zM754,191h2v1h-2zM756,178h1v14h-1zM756,178h2v1h-2zM758,178h1v14h-1zM758,191h1v1h-1zM759,178h1v14h-1zM759,178h2v1h-2zM761,178h1v14h-1zM761,191h2v1h-2zM763,178h1v14h-1zM763,178h1v1h-1zM764,178h1v14h-1zM764,191h2v1h-2zM766,178h1v14h-1zM766,178h2v1h-2zM768,178h1v14h-1zM768,191h1v1h-1zM769,178h1v14h-1zM769,178h2v1h-2zM771,178h1v14h-1zM771,191h2v1h-2zM773,178h1v14h-1zM773,178h1v1h-1zM774,178h1v14h-1zM774,191h2v1h-2zM776,178h1v14h-1zM776,178h2v1h-2zM778,178h1v14h-1zM778,191h1v1h-1zM779,178h1v14h-1zM779,178h2v1h-2zM781,178h1v14h-1zM781,191h2v1h-2zM783,178h1v14h-1zM783,178h1v1h-1zM784,178h1v14h-1zM784,191h2v1h-2zM786,178h1v14h-1zM786,178h2v1h-2zM788,178h1v14h-1zM788,191h1v1h-1zM789,178h1v14h-1zM789,178h2v1h-2zM791,178h1v14h-1zM791,191h2v1h-2zM793,178h1v14h-1zM793,178h1v1h-1zM794,178h1v14h-1zM794,191h2v1h-2zM796,178h1v14h-1zM796,178h2v1h-2zM798,178h1v14h-1zM798,191h1v1h-1zM799,178h1v14h-1zM799,178h2v1h-2zM801,178h1v14h-1zM801,191h2v1h-2zM803,178h1v14h-1zM803,178h1v1h-1zM804,178h1v14h-1zM804,191h2v1h-2zM806,178h1v14h-1zM806,178h2v1h-2zM808,178h1v14h-1zM808,191h1v1h-1zM809,178h1v14h-1zM809,178h2v1h-2zM811,178h1v14h-1zM811,191h2v1h-2zM813,178h1v14h-1zM813,178h1v1h-1zM814,178h1v14h-1zM814,191h2v1h-2zM816,178h1v14h-1zM816,178h2v1h-2zM818,178h1v14h-1zM818,191h1v1h-1zM819,178h1v14h-1zM819,178h2v1h-2zM821,178h1v14h-1zM821,191h2v1h-2zM823,178h1v14h-1zM823,178h1v1h-1zM824,178h1v14h-1zM824,191h2v1h-2zM826,178h1v14h-1zM826,178h1v1h-1zM827,178h1v14h-1zM827,191h2v1h-2zM829,178h1v14h-1zM829,178h2v1h-2zM831,178h1v14h-1zM831,191h1v1h-1zM832,178h1v14h-1zM832,178h2v1h-2zM834,178h1v14h-1zM834,191h2v1h-2zM836,178h1v14h-1zM836,178h1v1h-1zM837,178h1v14h-1zM837,191h2v1h-2zM839,178h1v14h-1zM839,178h2v1h-2zM841,178h1v14h-1zM841,191h1v1h-1zM842,178h1v14h-1zM842,178h2v1h-2zM844,178h1v14h-1zM844,191h2v1h-2zM846,178h1v14h-1zM846,178h1v1h-1zM847,178h1v14h-1zM847,191h2v1h-2zM849,178h1v14h-1zM849,178h2v1h-2zM851,178h1v14h-1zM851,191h1v1h-1zM852,178h1v14h-1zM852,178h2v1h-2zM854,178h1v14h-1zM854,191h2v1h-2zM856,178h1v14h-1zM856,178h1v1h-1zM857,178h1v14h-1zM857,191h2v1h-2zM859,178h1v14h-1zM859,178h2v1h-2zM861,178h1v14h-1zM861,191h1v1h-1zM862,178h1v14h-1zM862,178h2v1h-2zM864,178h1v14h-1zM864,191h2v1h-2zM866,178h1v14h-1zM866,178h1v1h-1zM867,178h1v14h-1zM867,191h2v1h-2zM869,178h1v14h-1zM869,178h2v1h-2zM871,178h1v14h-1zM871,191h1v1h-1zM872,178h1v14h-1zM872,178h2v1h-2zM874,178h1v14h-1zM874,191h2v1h-2zM876,178h1v14h-1zM876,178h1v1h-1zM877,178h1v14h-1zM877,191h2v1h-2zM879,178h1v14h-1zM879,178h2v1h-2zM881,178h1v14h-1zM881,191h1v1h-1zM882,178h1v14h-1zM882,178h2v1h-2zM884,178h1v14h-1zM884,191h2v1h-2zM886,178h1v14h-1zM886,178h1v1h-1zM887,178h1v14h-1zM887,191h2v1h-2zM889,178h1v14h-1zM889,178h2v1h-2zM891,178h1v14h-1zM891,191h1v1h-1zM892,178h1v14h-1zM892,178h2v1h-2zM894,178h1v14h-1zM894,191h2v1h-2zM896,178h1v14h-1zM896,178h1v1h-1zM897,178h1v14h-1zM897,191h2v1h-2zM899,178h1v14h-1zM899,178h2v1h-2zM901,178h1v14h-1zM901,191h1v1h-1zM902,178h1v14h-1zM902,178h2v1h-2zM904,178h1v14h-1zM904,191h2v1h-2zM906,178h1v14h-1zM906,178h1v1h-1zM907,178h1v14h-1zM907,191h2v1h-2zM909,178h1v14h-1zM909,178h2v1h-2zM911,178h1v14h-1zM911,191h1v1h-1zM912,178h1v14h-1zM912,178h2v1h-2zM914,178h1v14h-1zM914,191h2v1h-2zM916,178h1v14h-1zM916,178h1v1h-1zM917,178h1v14h-1zM917,191h2v1h-2zM919,178h1v14h-1zM919,178h2v1h-2zM921,178h1v14h-1zM921,191h1v1h-1zM922,178h1v14h-1zM922,178h2v1h-2zM924,178h1v14h-1zM924,191h2v1h-2zM926,178h1v14h-1zM926,178h1v1h-1zM927,178h1v14h-1zM927,191h2v1h-2zM929,178h1v14h-1zM929,178h2v1h-2zM931,178h1v14h-1zM931,191h1v1h-1zM932,178h1v14h-1zM932,178h2v1h-2zM934,178h1v14h-1zM934,191h2v1h-2zM936,178h1v14h-1zM936,178h1v1h-1zM937,178h1v14h-1zM937,191h2v1h-2zM939,178h1v14h-1zM939,178h1v1h-1zM940,178h1v14h-1zM940,191h2v1h-2zM942,178h1v14h-1zM942,178h2v1h-2zM944,178h1v14h-1zM944,191h1v1h-1zM945,178h1v14h-1zM945,178h2v1h-2zM947,178h1v14h-1zM947,191h2v1h-2zM949,178h1v14h-1zM949,178h1v1h-1zM950,178h1v14h-1zM950,191h2v1h-2zM952,178h1v14h-1zM952,178h2v1h-2zM954,178h1v14h-1zM954,191h1v1h-1zM955,178h1v14h-1zM955,178h2v1h-2zM957,178h1v14h-1zM957,191h2v1h-2zM959,178h1v14h-1zM959,178h1v1h-1zM960,178h1v14h-1zM960,191h2v1h-2zM962,178h1v14h-1zM962,178h2v1h-2zM964,178h1v14h-1zM964,191h1v1h-1zM965,178h1v14h-1zM965,178h2v1h-2zM967,178h1v14h-1zM967,191h2v1h-2zM969,178h1v14h-1zM969,178h1v1h-1zM970,178h1v14h-1zM970,191h2v1h-2zM972,178h1v14h-1zM972,178h2v1h-2zM974,178h1v14h-1zM974,191h1v1h-1zM975,178h1v14h-1zM975,178h2v1h-2zM977,178h1v14h-1zM977,191h2v1h-2zM979,178h1v14h-1zM979,178h1v1h-1zM980,178h1v14h-1zM980,191h2v1h-2zM982,178h1v14h-1zM982,178h2v1h-2zM984,178h1v14h-1zM984,191h1v1h-1zM985,178h1v14h-1zM985,178h2v1h-2zM987,178h1v14h-1zM987,191h2v1h-2zM989,178h1v14h-1zM989,178h1v1h-1zM990,178h1v14h-1zM990,191h2v1h-2zM992,178h1v14h-1zM992,178h2v1h-2zM994,178h1v14h-1zM994,191h1v1h-1zM995,178h1v14h-1zM995,178h2v1h-2zM997,178h1v14h-1zM997,191h2v1h-2zM999,178h1v14h-1zM999,178h1v1h-1zM1000,178h1v14h-1zM1000,191h2v1h-2zM1002,178h1v14h-1zM1002,178h2v1h-2zM1004,178h1v14h-1zM1004,191h1v1h-1zM1005,178h1v14h-1zM1005,178h2v1h-2zM1007,178h1v14h-1zM1007,191h2v1h-2zM1009,178h1v14h-1zM1009,178h1v1h-1zM1010,178h1v14h-1zM1010,191h2v1h-2zM1012,178h1v14h-1zM1012,178h2v1h-2zM1014,178h1v14h-1zM1014,191h1v1h-1zM1015,178h1v14h-1zM1015,178h2v1h-2zM1017,178h1v14h-1zM1017,191h2v1h-2zM1019,178h1v14h-1zM1019,178h1v1h-1zM1020,178h1v14h-1zM1020,191h2v1h-2zM1022,178h1v14h-1zM1022,178h2v1h-2zM1024,178h1v14h-1zM1024,191h1v1h-1zM1025,178h1v14h-1zM1025,178h2v1h-2zM1027,178h1v14h-1zM1027,191h2v1h-2zM1029,178h1v14h-1zM1029,178h1v1h-1zM1030,178h1v14h-1zM1030,191h2v1h-2zM1032,178h1v14h-1zM1032,178h2v1h-2zM1034,178h1v14h-1zM1034,191h1v1h-1zM1035,178h1v14h-1zM1035,178h2v1h-2zM1037,178h1v14h-1zM1037,191h2v1h-2zM1039,178h1v14h-1zM1039,178h1v1h-1zM1040,178h1v14h-1zM1040,191h2v1h-2zM1042,178h1v14h-1zM1042,178h2v1h-2zM1044,178h1v14h-1zM1044,191h1v1h-1zM1045,178h1v14h-1zM1045,178h2v1h-2zM1047,178h1v14h-1zM1047,191h2v1h-2zM1049,178h1v14h-1zM1049,178h1v1h-1zM1050,178h1v14h-1zM1050,191h2v1h-2zM1052,178h1v14h-1zM1052,178h1v1h-1zM1053,178h1v14h-1zM1053,191h2v1h-2zM1055,178h1v14h-1zM1055,178h2v1h-2zM1057,178h1v14h-1zM1057,191h1v1h-1zM1058,178h1v14h-1zM1058,178h2v1h-2zM1060,178h1v14h-1zM1060,191h2v1h-2zM1062,178h1v14h-1zM1062,178h1v1h-1zM1063,178h1v14h-1zM1063,191h2v1h-2zM1065,178h1v14h-1zM1065,178h2v1h-2zM1067,178h1v14h-1zM1067,191h1v1h-1zM1068,178h1v14h-1zM1068,178h2v1h-2zM1070,178h1v14h-1zM1070,191h2v1h-2zM1072,178h1v14h-1zM1072,178h1v1h-1zM1073,178h1v14h-1zM1073,191h2v1h-2zM1075,178h1v14h-1zM1075,178h2v1h-2zM1077,178h1v14h-1zM1077,191h1v1h-1zM1078,178h1v14h-1zM1078,178h2v1h-2zM1080,178h1v14h-1zM1080,191h2v1h-2zM1082,178h1v14h-1zM1082,178h1v1h-1zM1083,178h1v14h-1zM1083,191h2v1h-2zM1085,178h1v14h-1zM1085,178h2v1h-2zM1087,178h1v14h-1zM1087,191h1v1h-1zM1088,178h1v14h-1zM1088,178h2v1h-2zM1090,178h1v14h-1zM1090,191h2v1h-2zM1092,178h1v14h-1zM1092,178h1v1h-1zM1093,178h1v14h-1zM1093,191h2v1h-2zM1095,178h1v14h-1zM1095,178h2v1h-2zM1097,178h1v14h-1zM1097,191h1v1h-1zM1098,178h1v14h-1zM1098,178h2v1h-2zM1100,178h1v14h-1zM1100,191h2v1h-2zM1102,178h1v14h-1zM1102,178h1v1h-1zM1103,178h1v14h-1zM1103,191h2v1h-2zM1105,178h1v14h-1zM1105,178h2v1h-2zM1107,178h1v14h-1zM1107,191h1v1h-1zM1108,178h1v14h-1zM1108,178h2v1h-2zM1110,178h1v14h-1zM1110,191h2v1h-2zM1112,178h1v14h-1zM1112,178h1v1h-1zM1113,178h1v14h-1zM1113,191h2v1h-2zM1115,178h1v14h-1zM1115,178h2v1h-2zM1117,178h1v14h-1zM1117,191h1v1h-1zM1118,178h1v14h-1zM1118,178h2v1h-2zM1120,178h1v14h-1zM1120,191h2v1h-2zM1122,178h1v14h-1zM1122,178h1v1h-1zM1123,178h1v14h-1zM1123,191h2v1h-2zM1125,178h1v14h-1zM1125,178h2v1h-2zM1127,178h1v14h-1zM1127,191h1v1h-1zM1128,178h1v14h-1zM1128,178h2v1h-2zM1130,178h1v14h-1zM1130,191h2v1h-2zM1132,178h1v14h-1zM1132,178h1v1h-1zM1133,178h1v14h-1zM1133,191h2v1h-2zM1135,178h1v14h-1zM1135,178h2v1h-2zM1137,178h1v14h-1zM1137,191h1v1h-1zM1138,178h1v14h-1zM1138,178h2v1h-2zM1140,178h1v14h-1zM1140,191h2v1h-2zM1142,178h1v14h-1zM1142,178h1v1h-1zM1143,178h1v14h-1zM1143,191h2v1h-2zM1145,178h1v14h-1zM1145,178h2v1h-2zM1147,178h1v14h-1zM1147,191h1v1h-1zM1148,178h1v14h-1zM1148,178h2v1h-2zM1150,178h1v14h-1zM1150,191h2v1h-2zM1152,178h1v14h-1zM1152,178h1v1h-1zM1153,178h1v14h-1zM1153,191h2v1h-2zM1155,178h1v14h-1zM1155,178h2v1h-2zM1157,178h1v14h-1zM1157,191h1v1h-1zM1158,178h1v14h-1zM1158,178h2v1h-2zM1160,178h1v14h-1zM1160,191h2v1h-2zM1162,178h1v14h-1zM1162,178h1v1h-1zM1163,178h1v14h-1zM1163,191h2v1h-2zM1165,178h1v14h-1zM1165,178h1v1h-1zM1166,178h1v14h-1zM1166,191h2v1h-2zM1168,178h1v14h-1zM1168,178h2v1h-2zM1170,178h1v14h-1zM1170,191h1v1h-1zM1171,178h1v14h-1zM1171,178h2v1h-2zM1173,178h1v14h-1zM1173,191h2v1h-2zM1175,178h1v14h-1zM1175,178h1v1h-1zM1176,178h1v14h-1zM1176,191h2v1h-2zM1178,178h1v14h-1zM1178,178h2v1h-2zM1180,178h1v14h-1zM1180,191h1v1h-1zM1181,178h1v14h-1zM1181,178h2v1h-2zM1183,178h1v14h-1zM1183,191h2v1h-2zM1185,178h1v14h-1zM1185,178h1v1h-1zM1186,178h1v14h-1zM1186,191h2v1h-2zM1188,178h1v14h-1zM1188,178h2v1h-2zM1190,178h1v14h-1zM1190,191h1v1h-1z" fill="#4ed44e"/><rect x="231" y="208" width="958" height="1" fill="#4ed44e"/><rect x="231" y="211" width="958" height="1" fill="#063206"/><path d="M214,228h19v1h-19z M214,241h19v1h-19zM237,228h9v1h-9z M237,241h9v1h-9zM250,228h8v1h-8z M250,241h8v1h-8zM262,228h9v1h-9z M262,241h9v1h-9zM275,228h9v1h-9z M275,241h9v1h-9zM288,228h10v1h-10z M288,241h10v1h-10zM305,228h5v1h-5z M305,241h5v1h-5zM317,228h6v1h-6z M317,241h6v1h-6zM327,228h8v1h-8z M327,241h8v1h-8zM339,228h9v1h-9z M339,241h9v1h-9zM352,228h8v1h-8z M352,241h8v1h-8zM364,228h8v1h-8z M364,241h8v1h-8zM376,228h7v1h-7z M376,241h7v1h-7zM387,228h8v1h-8z M387,241h8v1h-8zM402,228h5v1h-5z M402,241h5v1h-5zM411,228h8v1h-8z M411,241h8v1h-8zM423,228h9v1h-9z M423,241h9v1h-9zM436,228h8v1h-8z M436,241h8v1h-8zM448,228h7v1h-7z M448,241h7v1h-7zM459,228h9v1h-9z M459,241h9v1h-9zM472,228h8v1h-8z M472,241h8v1h-8zM484,228h7v1h-7z M484,241h7v1h-7zM495,228h7v1h-7z M495,241h7v1h-7zM506,228h7v1h-7z M506,241h7v1h-7zM517,228h7v1h-7z M517,241h7v1h-7zM528,228h8v1h-8z M528,241h8v1h-8zM544,228h3v1h-3z M544,241h3v1h-3zM551,228h8v1h-8z M551,241h8v1h-8zM563,228h7v1h-7z M563,241h7v1h-7zM577,228h4v1h-4z M577,241h4v1h-4zM585,228h7v1h-7z M585,241h7v1h-7zM599,228h4v1h-4z M599,241h4v1h-4zM607,228h7v1h-7z M607,241h7v1h-7zM622,228h3v1h-3z M622,241h3v1h-3zM632,228h3v1h-3z M632,241h3v1h-3zM639,228h7v1h-7z M639,241h7v1h-7zM650,228h7v1h-7z M650,241h7v1h-7zM661,228h7v1h-7z M661,241h7v1h-7zM672,228h7v1h-7z M672,241h7v1h-7zM687,228h3v1h-3z M687,241h3v1h-3zM694,228h7v1h-7z M694,241h7v1h-7zM705,228h7v1h-7z M705,241h7v1h-7zM716,228h7v1h-7z M716,241h7v1h-7zM727,228h7v1h-7z M727,241h7v1h-7zM738,228h7v1h-7z M738,241h7v1h-7zM752,228h4v1h-4z M752,241h4v1h-4zM760,228h7v1h-7z M760,241h7v1h-7zM771,228h6v1h-6z M771,241h6v1h-6zM781,228h6v1h-6z M781,241h6v1h-6zM794,228h4v1h-4z M794,241h4v1h-4zM802,228h6v1h-6z M802,241h6v1h-6zM812,228h6v1h-6z M812,241h6v1h-6zM822,228h6v1h-6z M822,241h6v1h-6zM832,228h5v1h-5z M832,241h5v1h-5zM841,228h4v1h-4z M841,241h4v1h-4zM849,228h5v1h-5z M849,241h5v1h-5zM858,228h3v1h-3z M858,241h3v1h-3zM865,228h4v1h-4z M865,241h4v1h-4zM873,228h3v1h-3z M873,241h3v1h-3zM880,228h3v1h-3z M880,241h3v1h-3zM887,228h2v1h-2z M887,241h2v1h-2zM893,228h3v1h-3z M893,241h3v1h-3zM900,228h3v1h-3z M900,241h3v1h-3zM907,228h2v1h-2z M907,241h2v1h-2zM913,228h2v1h-2z M913,241h2v1h-2zM919,228h3v1h-3z M919,241h3v1h-3zM926,228h2v1h-2z M926,241h2v1h-2zM932,228h2v1h-2z M932,241h2v1h-2zM938,228h2v1h-2z M938,241h2v1h-2zM944,228h2v1h-2z M944,241h2v1h-2zM950,228h1v1h-1z M950,241h1v1h-1zM955,228h2v1h-2z M955,241h2v1h-2zM961,228h1v1h-1z M961,241h1v1h-1zM966,228h2v1h-2z M966,241h2v1h-2zM972,228h2v1h-2z M972,241h2v1h-2zM978,228h1v1h-1z M978,241h1v1h-1zM983,228h2v1h-2z M983,241h2v1h-2zM989,228h1v1h-1z M989,241h1v1h-1zM994,228h1v1h-1z M994,241h1v1h-1zM999,228h2v1h-2z M999,241h2v1h-2zM1005,228h1v1h-1z M1005,241h1v1h-1zM1010,228h2v1h-2z M1010,241h2v1h-2zM1016,228h1v1h-1z M1016,241h1v1h-1zM1021,228h2v1h-2z M1021,241h2v1h-2zM1027,228h1v1h-1z M1027,241h1v1h-1zM1032,228h2v1h-2z M1032,241h2v1h-2zM1038,228h1v1h-1z M1038,241h1v1h-1zM1043,228h2v1h-2z M1043,241h2v1h-2zM1049,228h2v1h-2z M1049,241h2v1h-2zM1055,228h1v1h-1z M1055,241h1v1h-1zM1060,228h2v1h-2z M1060,241h2v1h-2zM1066,228h1v1h-1z M1066,241h1v1h-1zM1071,228h1v1h-1z M1071,241h1v1h-1zM1076,228h2v1h-2z M1076,241h2v1h-2zM1082,228h2v1h-2z M1082,241h2v1h-2zM1088,228h1v1h-1z M1088,241h1v1h-1zM1093,228h2v1h-2z M1093,241h2v1h-2zM1099,228h1v1h-1z M1099,241h1v1h-1zM1104,228h2v1h-2z M1104,241h2v1h-2zM1110,228h2v1h-2z M1110,241h2v1h-2zM1116,228h1v1h-1z M1116,241h1v1h-1zM1121,228h2v1h-2z M1121,241h2v1h-2zM1127,228h2v1h-2z M1127,241h2v1h-2zM1133,228h1v1h-1z M1133,241h1v1h-1zM1138,228h2v1h-2z M1138,241h2v1h-2zM1144,228h1v1h-1z M1144,241h1v1h-1zM1149,228h2v1h-2z M1149,241h2v1h-2zM1155,228h2v1h-2z M1155,241h2v1h-2zM1161,228h2v1h-2z M1161,241h2v1h-2zM1167,228h1v1h-1z M1167,241h1v1h-1zM1172,228h3v1h-3z M1172,241h3v1h-3zM1179,228h1v1h-1z M1179,241h1v1h-1zM1184,228h2v1h-2z M1184,241h2v1h-2zM1190,228h18v1h-18z M1190,241h18v1h-18zM233,229h1v3h-1z M234,232h1v6h-1z M233,238h1v3h-1zM237,229h1v3h-1z M236,232h1v6h-1z M237,238h1v3h-1zM235,230h1v2h-1z M235,238h1v2h-1zM246,229h1v3h-1z M247,232h1v6h-1z M246,238h1v3h-1zM250,229h1v3h-1z M249,232h1v6h-1z M250,238h1v3h-1zM248,230h1v2h-1z M248,238h1v2h-1zM258,229h1v3h-1z M259,232h1v6h-1z M258,238h1v3h-1zM262,229h1v3h-1z M261,232h1v6h-1z M262,238h1v3h-1zM260,230h1v2h-1z M260,238h1v2h-1zM271,229h1v3h-1z M272,232h1v6h-1z M271,238h1v3h-1zM275,229h1v3h-1z M274,232h1v6h-1z M275,238h1v3h-1zM273,230h1v2h-1z M273,238h1v2h-1zM284,229h1v3h-1z M285,232h1v6h-1z M284,238h1v3h-1zM288,229h1v3h-1z M287,232h1v6h-1z M288,238h1v3h-1zM286,230h1v2h-1z M286,238h1v2h-1zM298,229h1v3h-1z M299,232h1v6h-1z M298,238h1v3h-1zM302,229h1v3h-1z M301,232h1v6h-1z M302,238h1v3h-1zM300,230h1v2h-1z M300,238h1v2h-1zM301,229h1v3h-1z M302,232h1v6h-1z M301,238h1v3h-1zM305,229h1v3h-1z M304,232h1v6h-1z M305,238h1v3h-1zM303,230h1v2h-1z M303,238h1v2h-1zM310,229h1v3h-1z M311,232h1v6h-1z M310,238h1v3h-1zM314,229h1v3h-1z M313,232h1v6h-1z M314,238h1v3h-1zM312,230h1v2h-1z M312,238h1v2h-1zM313,229h1v3h-1z M314,232h1v6h-1z M313,238h1v3h-1zM317,229h1v3h-1z M316,232h1v6h-1z M317,238h1v3h-1zM315,230h1v2h-1z M315,238h1v2h-1zM323,229h1v3h-1z M324,232h1v6h-1z M323,238h1v3h-1zM327,229h1v3h-1z M326,232h1v6h-1z M327,238h1v3h-1zM325,230h1v2h-1z M325,238h1v2h-1zM335,229h1v3h-1z M336,232h1v6h-1z M335,238h1v3h-1zM339,229h1v3h-1z M338,232h1v6h-1z M339,238h1v3h-1zM337,230h1v2h-1z M337,238h1v2h-1zM348,229h1v3h-1z M349,232h1v6h-1z M348,238h1v3h-1zM352,229h1v3h-1z M351,232h1v6h-1z M352,238h1v3h-1zM350,230h1v2h-1z M350,238h1v2h-1zM360,229h1v3h-1z M361,232h1v6h-1z M360,238h1v3h-1zM364,229h1v3h-1z M363,232h1v6h-1z M364,238h1v3h-1zM362,230h1v2h-1z M362,238h1v2h-1zM372,229h1v3h-1z M373,232h1v6h-1z M372,238h1v3h-1zM376,229h1v3h-1z M375,232h1v6h-1z M376,238h1v3h-1zM374,230h1v2h-1z M374,238h1v2h-1zM383,229h1v3h-1z M384,232h1v6h-1z M383,238h1v3h-1zM387,229h1v3h-1z M386,232h1v6h-1z M387,238h1v3h-1zM385,230h1v2h-1z M385,238h1v2h-1zM395,229h1v3h-1z M396,232h1v6h-1z M395,238h1v3h-1zM399,229h1v3h-1z M398,232h1v6h-1z M399,238h1v3h-1zM397,230h1v2h-1z M397,238h1v2h-1zM398,229h1v3h-1z M399,232h1v6h-1z M398,238h1v3h-1zM402,229h1v3h-1z M401,232h1v6h-1z M402,238h1v3h-1zM400,230h1v2h-1z M400,238h1v2h-1zM407,229h1v3h-1z M408,232h1v6h-1z M407,238h1v3h-1zM411,229h1v3h-1z M410,232h1v6h-1z M411,238h1v3h-1zM409,230h1v2h-1z M409,238h1v2h-1zM419,229h1v3h-1z M420,232h1v6h-1z M419,238h1v3h-1zM423,229h1v3h-1z M422,232h1v6h-1z M423,238h1v3h-1zM421,230h1v2h-1z M421,238h1v2h-1zM432,229h1v3h-1z M433,232h1v6h-1z M432,238h1v3h-1zM436,229h1v3h-1z M435,232h1v6h-1z M436,238h1v3h-1zM434,230h1v2h-1z M434,238h1v2h-1zM444,229h1v3h-1z M445,232h1v6h-1z M444,238h1v3h-1zM448,229h1v3h-1z M447,232h1v6h-1z M448,238h1v3h-1zM446,230h1v2h-1z M446,238h1v2h-1zM455,229h1v3h-1z M456,232h1v6h-1z M455,238h1v3h-1zM459,229h1v3h-1z M458,232h1v6h-1z M459,238h1v3h-1zM457,230h1v2h-1z M457,238h1v2h-1zM468,229h1v3h-1z M469,232h1v6h-1z M468,238h1v3h-1zM472,229h1v3h-1z M471,232h1v6h-1z M472,238h1v3h-1zM470,230h1v2h-1z M470,238h1v2h-1zM480,229h1v3h-1z M481,232h1v6h-1z M480,238h1v3h-1zM484,229h1v3h-1z M483,232h1v6h-1z M484,238h1v3h-1zM482,230h1v2h-1z M482,238h1v2h-1zM491,229h1v3h-1z M492,232h1v6h-1z M491,238h1v3h-1zM495,229h1v3h-1z M494,232h1v6h-1z M495,238h1v3h-1zM493,230h1v2h-1z M493,238h1v2h-1zM502,229h1v3h-1z M503,232h1v6h-1z M502,238h1v3h-1zM506,229h1v3h-1z M505,232h1v6h-1z M506,238h1v3h-1zM504,230h1v2h-1z M504,238h1v2h-1zM513,229h1v3h-1z M514,232h1v6h-1z M513,238h1v3h-1zM517,229h1v3h-1z M516,232h1v6h-1z M517,238h1v3h-1zM515,230h1v2h-1z M515,238h1v2h-1zM524,229h1v3h-1z M525,232h1v6h-1z M524,238h1v3h-1zM528,229h1v3h-1z M527,232h1v6h-1z M528,238h1v3h-1zM526,230h1v2h-1z M526,238h1v2h-1zM536,229h1v3h-1z M537,232h1v6h-1z M536,238h1v3h-1zM540,229h1v3h-1z M539,232h1v6h-1z M540,238h1v3h-1zM538,230h1v2h-1z M538,238h1v2h-1zM540,229h1v3h-1z M541,232h1v6h-1z M540,238h1v3h-1zM544,229h1v3h-1z M543,232h1v6h-1z M544,238h1v3h-1zM542,230h1v2h-1z M542,238h1v2h-1zM547,229h1v3h-1z M548,232h1v6h-1z M547,238h1v3h-1zM551,229h1v3h-1z M550,232h1v6h-1z M551,238h1v3h-1zM549,230h1v2h-1z M549,238h1v2h-1zM559,229h1v3h-1z M560,232h1v6h-1z M559,238h1v3h-1zM563,229h1v3h-1z M562,232h1v6h-1z M563,238h1v3h-1zM561,230h1v2h-1z M561,238h1v2h-1zM570,229h1v3h-1z M571,232h1v6h-1z M570,238h1v3h-1zM574,229h1v3h-1z M573,232h1v6h-1z M574,238h1v3h-1zM572,230h1v2h-1z M572,238h1v2h-1zM573,229h1v3h-1z M574,232h1v6h-1z M573,238h1v3h-1zM577,229h1v3h-1z M576,232h1v6h-1z M577,238h1v3h-1zM575,230h1v2h-1z M575,238h1v2h-1zM581,229h1v3h-1z M582,232h1v6h-1z M581,238h1v3h-1zM585,229h1v3h-1z M584,232h1v6h-1z M585,238h1v3h-1zM583,230h1v2h-1z M583,238h1v2h-1zM592,229h1v3h-1z M593,232h1v6h-1z M592,238h1v3h-1zM596,229h1v3h-1z M595,232h1v6h-1z M596,238h1v3h-1zM594,230h1v2h-1z M594,238h1v2h-1zM595,229h1v3h-1z M596,232h1v6h-1z M595,238h1v3h-1zM599,229h1v3h-1z M598,232h1v6h-1z M599,238h1v3h-1zM597,230h1v2h-1z M597,238h1v2h-1zM603,229h1v3h-1z M604,232h1v6h-1z M603,238h1v3h-1zM607,229h1v3h-1z M606,232h1v6h-1z M607,238h1v3h-1zM605,230h1v2h-1z M605,238h1v2h-1zM614,229h1v3h-1z M615,232h1v6h-1z M614,238h1v3h-1zM618,229h1v3h-1z M617,232h1v6h-1z M618,238h1v3h-1zM616,230h1v2h-1z M616,238h1v2h-1zM618,229h1v3h-1z M619,232h1v6h-1z M618,238h1v3h-1zM622,229h1v3h-1z M621,232h1v6h-1z M622,238h1v3h-1zM620,230h1v2h-1z M620,238h1v2h-1zM625,229h1v3h-1z M626,232h1v6h-1z M625,238h1v3h-1zM629,229h1v3h-1z M628,232h1v6h-1z M629,238h1v3h-1zM627,230h1v2h-1z M627,238h1v2h-1zM628,229h1v3h-1z M629,232h1v6h-1z M628,238h1v3h-1zM632,229h1v3h-1z M631,232h1v6h-1z M632,238h1v3h-1zM630,230h1v2h-1z M630,238h1v2h-1zM635,229h1v3h-1z M636,232h1v6h-1z M635,238h1v3h-1zM639,229h1v3h-1z M638,232h1v6h-1z M639,238h1v3h-1zM637,230h1v2h-1z M637,238h1v2h-1zM646,229h1v3h-1z M647,232h1v6h-1z M646,238h1v3h-1zM650,229h1v3h-1z M649,232h1v6h-1z M650,238h1v3h-1zM648,230h1v2h-1z M648,238h1v2h-1zM657,229h1v3h-1z M658,232h1v6h-1z M657,238h1v3h-1zM661,229h1v3h-1z M660,232h1v6h-1z M661,238h1v3h-1zM659,230h1v2h-1z M659,238h1v2h-1zM668,229h1v3h-1z M669,232h1v6h-1z M668,238h1v3h-1zM672,229h1v3h-1z M671,232h1v6h-1z M672,238h1v3h-1zM670,230h1v2h-1z M670,238h1v2h-1zM679,229h1v3h-1z M680,232h1v6h-1z M679,238h1v3h-1zM683,229h1v3h-1z M682,232h1v6h-1z M683,238h1v3h-1zM681,230h1v2h-1z M681,238h1v2h-1zM683,229h1v3h-1z M684,232h1v6h-1z M683,238h1v3h-1zM687,229h1v3h-1z M686,232h1v6h-1z M687,238h1v3h-1zM685,230h1v2h-1z M685,238h1v2h-1zM690,229h1v3h-1z M691,232h1v6h-1z M690,238h1v3h-1zM694,229h1v3h-1z M693,232h1v6h-1z M694,238h1v3h-1zM692,230h1v2h-1z M692,238h1v2h-1zM701,229h1v3h-1z M702,232h1v6h-1z M701,238h1v3h-1zM705,229h1v3h-1z M704,232h1v6h-1z M705,238h1v3h-1zM703,230h1v2h-1z M703,238h1v2h-1zM712,229h1v3h-1z M713,232h1v6h-1z M712,238h1v3h-1zM716,229h1v3h-1z M715,232h1v6h-1z M716,238h1v3h-1zM714,230h1v2h-1z M714,238h1v2h-1zM723,229h1v3h-1z M724,232h1v6h-1z M723,238h1v3h-1zM727,229h1v3h-1z M726,232h1v6h-1z M727,238h1v3h-1zM725,230h1v2h-1z M725,238h1v2h-1zM734,229h1v3h-1z M735,232h1v6h-1z M734,238h1v3h-1zM738,229h1v3h-1z M737,232h1v6h-1z M738,238h1v3h-1zM736,230h1v2h-1z M736,238h1v2h-1zM745,229h1v3h-1z M746,232h1v6h-1z M745,238h1v3h-1zM749,229h1v3h-1z M748,232h1v6h-1z M749,238h1v3h-1zM747,230h1v2h-1z M747,238h1v2h-1zM748,229h1v3h-1z M749,232h1v6h-1z M748,238h1v3h-1zM752,229h1v3h-1z M751,232h1v6h-1z M752,238h1v3h-1zM750,230h1v2h-1z M750,238h1v2h-1zM756,229h1v3h-1z M757,232h1v6h-1z M756,238h1v3h-1zM760,229h1v3h-1z M759,232h1v6h-1z M760,238h1v3h-1zM758,230h1v2h-1z M758,238h1v2h-1zM767,229h1v3h-1z M768,232h1v6h-1z M767,238h1v3h-1zM771,229h1v3h-1z M770,232h1v6h-1z M771,238h1v3h-1zM769,230h1v2h-1z M769,238h1v2h-1zM777,229h1v3h-1z M778,232h1v6h-1z M777,238h1v3h-1zM781,229h1v3h-1z M780,232h1v6h-1z M781,238h1v3h-1zM779,230h1v2h-1z M779,238h1v2h-1zM787,229h1v3h-1z M788,232h1v6h-1z M787,238h1v3h-1zM791,229h1v3h-1z M790,232h1v6h-1z M791,238h1v3h-1zM789,230h1v2h-1z M789,238h1v2h-1zM790,229h1v3h-1z M791,232h1v6h-1z M790,238h1v3h-1zM794,229h1v3h-1z M793,232h1v6h-1z M794,238h1v3h-1zM792,230h1v2h-1z M792,238h1v2h-1zM798,229h1v3h-1z M799,232h1v6h-1z M798,238h1v3h-1zM802,229h1v3h-1z M801,232h1v6h-1z M802,238h1v3h-1zM800,230h1v2h-1z M800,238h1v2h-1zM808,229h1v3h-1z M809,232h1v6h-1z M808,238h1v3h-1zM812,229h1v3h-1z M811,232h1v6h-1z M812,238h1v3h-1zM810,230h1v2h-1z M810,238h1v2h-1zM818,229h1v3h-1z M819,232h1v6h-1z M818,238h1v3h-1zM822,229h1v3h-1z M821,232h1v6h-1z M822,238h1v3h-1zM820,230h1v2h-1z M820,238h1v2h-1zM828,229h1v3h-1z M829,232h1v6h-1z M828,238h1v3h-1zM832,229h1v3h-1z M831,232h1v6h-1z M832,238h1v3h-1zM830,230h1v2h-1z M830,238h1v2h-1zM837,229h1v3h-1z M838,232h1v6h-1z M837,238h1v3h-1zM841,229h1v3h-1z M840,232h1v6h-1z M841,238h1v3h-1zM839,230h1v2h-1z M839,238h1v2h-1zM845,229h1v3h-1z M846,232h1v6h-1z M845,238h1v3h-1zM849,229h1v3h-1z M848,232h1v6h-1z M849,238h1v3h-1zM847,230h1v2h-1z M847,238h1v2h-1zM854,229h1v3h-1z M855,232h1v6h-1z M854,238h1v3h-1zM858,229h1v3h-1z M857,232h1v6h-1z M858,238h1v3h-1zM856,230h1v2h-1z M856,238h1v2h-1zM861,229h1v3h-1z M862,232h1v6h-1z M861,238h1v3h-1zM865,229h1v3h-1z M864,232h1v6h-1z M865,238h1v3h-1zM863,230h1v2h-1z M863,238h1v2h-1zM869,229h1v3h-1z M870,232h1v6h-1z M869,238h1v3h-1zM873,229h1v3h-1z M872,232h1v6h-1z M873,238h1v3h-1zM871,230h1v2h-1z M871,238h1v2h-1zM876,229h1v3h-1z M877,232h1v6h-1z M876,238h1v3h-1zM880,229h1v3h-1z M879,232h1v6h-1z M880,238h1v3h-1zM878,230h1v2h-1z M878,238h1v2h-1zM883,229h1v3h-1z M884,232h1v6h-1z M883,238h1v3h-1zM887,229h1v3h-1z M886,232h1v6h-1z M887,238h1v3h-1zM885,230h1v2h-1z M885,238h1v2h-1zM889,229h1v3h-1z M890,232h1v6h-1z M889,238h1v3h-1zM893,229h1v3h-1z M892,232h1v6h-1z M893,238h1v3h-1zM891,230h1v2h-1z M891,238h1v2h-1zM896,229h1v3h-1z M897,232h1v6h-1z M896,238h1v3h-1zM900,229h1v3h-1z M899,232h1v6h-1z M900,238h1v3h-1zM898,230h1v2h-1z M898,238h1v2h-1zM903,229h1v3h-1z M904,232h1v6h-1z M903,238h1v3h-1zM907,229h1v3h-1z M906,232h1v6h-1z M907,238h1v3h-1zM905,230h1v2h-1z M905,238h1v2h-1zM909,229h1v3h-1z M910,232h1v6h-1z M909,238h1v3h-1zM913,229h1v3h-1z M912,232h1v6h-1z M913,238h1v3h-1zM911,230h1v2h-1z M911,238h1v2h-1zM915,229h1v3h-1z M916,232h1v6h-1z M915,238h1v3h-1zM919,229h1v3h-1z M918,232h1v6h-1z M919,238h1v3h-1zM917,230h1v2h-1z M917,238h1v2h-1zM922,229h1v3h-1z M923,232h1v6h-1z M922,238h1v3h-1zM926,229h1v3h-1z M925,232h1v6h-1z M926,238h1v3h-1zM924,230h1v2h-1z M924,238h1v2h-1zM928,229h1v3h-1z M929,232h1v6h-1z M928,238h1v3h-1zM932,229h1v3h-1z M931,232h1v6h-1z M932,238h1v3h-1zM930,230h1v2h-1z M930,238h1v2h-1zM934,229h1v3h-1z M935,232h1v6h-1z M934,238h1v3h-1zM938,229h1v3h-1z M937,232h1v6h-1z M938,238h1v3h-1zM936,230h1v2h-1z M936,238h1v2h-1zM940,229h1v3h-1z M941,232h1v6h-1z M940,238h1v3h-1zM944,229h1v3h-1z M943,232h1v6h-1z M944,238h1v3h-1zM942,230h1v2h-1z M942,238h1v2h-1zM946,229h1v3h-1z M947,232h1v6h-1z M946,238h1v3h-1zM950,229h1v3h-1z M949,232h1v6h-1z M950,238h1v3h-1zM948,230h1v2h-1z M948,238h1v2h-1zM951,229h1v3h-1z M952,232h1v6h-1z M951,238h1v3h-1zM955,229h1v3h-1z M954,232h1v6h-1z M955,238h1v3h-1zM953,230h1v2h-1z M953,238h1v2h-1zM957,229h1v3h-1z M958,232h1v6h-1z M957,238h1v3h-1zM961,229h1v3h-1z M960,232h1v6h-1z M961,238h1v3h-1zM959,230h1v2h-1z M959,238h1v2h-1zM962,229h1v3h-1z M963,232h1v6h-1z M962,238h1v3h-1zM966,229h1v3h-1z M965,232h1v6h-1z M966,238h1v3h-1zM964,230h1v2h-1z M964,238h1v2h-1zM968,229h1v3h-1z M969,232h1v6h-1z M968,238h1v3h-1zM972,229h1v3h-1z M971,232h1v6h-1z M972,238h1v3h-1zM970,230h1v2h-1z M970,238h1v2h-1zM974,229h1v3h-1z M975,232h1v6h-1z M974,238h1v3h-1zM978,229h1v3h-1z M977,232h1v6h-1z M978,238h1v3h-1zM976,230h1v2h-1z M976,238h1v2h-1zM979,229h1v3h-1z M980,232h1v6h-1z M979,238h1v3h-1zM983,229h1v3h-1z M982,232h1v6h-1z M983,238h1v3h-1zM981,230h1v2h-1z M981,238h1v2h-1zM985,229h1v3h-1z M986,232h1v6h-1z M985,238h1v3h-1zM989,229h1v3h-1z M988,232h1v6h-1z M989,238h1v3h-1zM987,230h1v2h-1z M987,238h1v2h-1zM990,229h1v3h-1z M991,232h1v6h-1z M990,238h1v3h-1zM994,229h1v3h-1z M993,232h1v6h-1z M994,238h1v3h-1zM992,230h1v2h-1z M992,238h1v2h-1zM995,229h1v3h-1z M996,232h1v6h-1z M995,238h1v3h-1zM999,229h1v3h-1z M998,232h1v6h-1z M999,238h1v3h-1zM997,230h1v2h-1z M997,238h1v2h-1zM1001,229h1v3h-1z M1002,232h1v6h-1z M1001,238h1v3h-1zM1005,229h1v3h-1z M1004,232h1v6h-1z M1005,238h1v3h-1zM1003,230h1v2h-1z M1003,238h1v2h-1zM1006,229h1v3h-1z M1007,232h1v6h-1z M1006,238h1v3h-1zM1010,229h1v3h-1z M1009,232h1v6h-1z M1010,238h1v3h-1zM1008,230h1v2h-1z M1008,238h1v2h-1zM1012,229h1v3h-1z M1013,232h1v6h-1z M1012,238h1v3h-1zM1016,229h1v3h-1z M1015,232h1v6h-1z M1016,238h1v3h-1zM1014,230h1v2h-1z M1014,238h1v2h-1zM1017,229h1v3h-1z M1018,232h1v6h-1z M1017,238h1v3h-1zM1021,229h1v3h-1z M1020,232h1v6h-1z M1021,238h1v3h-1zM1019,230h1v2h-1z M1019,238h1v2h-1zM1023,229h1v3h-1z M1024,232h1v6h-1z M1023,238h1v3h-1zM1027,229h1v3h-1z M1026,232h1v6h-1z M1027,238h1v3h-1zM1025,230h1v2h-1z M1025,238h1v2h-1zM1028,229h1v3h-1z M1029,232h1v6h-1z M1028,238h1v3h-1zM1032,229h1v3h-1z M1031,232h1v6h-1z M1032,238h1v3h-1zM1030,230h1v2h-1z M1030,238h1v2h-1zM1034,229h1v3h-1z M1035,232h1v6h-1z M1034,238h1v3h-1zM1038,229h1v3h-1z M1037,232h1v6h-1z M1038,238h1v3h-1zM1036,230h1v2h-1z M1036,238h1v2h-1zM1039,229h1v3h-1z M1040,232h1v6h-1z M1039,238h1v3h-1zM1043,229h1v3h-1z M1042,232h1v6h-1z M1043,238h1v3h-1zM1041,230h1v2h-1z M1041,238h1v2h-1zM1045,229h1v3h-1z M1046,232h1v6h-1z M1045,238h1v3h-1zM1049,229h1v3h-1z M1048,232h1v6h-1z M1049,238h1v3h-1zM1047,230h1v2h-1z M1047,238h1v2h-1zM1051,229h1v3h-1z M1052,232h1v6h-1z M1051,238h1v3h-1zM1055,229h1v3h-1z M1054,232h1v6h-1z M1055,238h1v3h-1zM1053,230h1v2h-1z M1053,238h1v2h-1zM1056,229h1v3h-1z M1057,232h1v6h-1z M1056,238h1v3h-1zM1060,229h1v3h-1z M1059,232h1v6h-1z M1060,238h1v3h-1zM1058,230h1v2h-1z M1058,238h1v2h-1zM1062,229h1v3h-1z M1063,232h1v6h-1z M1062,238h1v3h-1zM1066,229h1v3h-1z M1065,232h1v6h-1z M1066,238h1v3h-1zM1064,230h1v2h-1z M1064,238h1v2h-1zM1067,229h1v3h-1z M1068,232h1v6h-1z M1067,238h1v3h-1zM1071,229h1v3h-1z M1070,232h1v6h-1z M1071,238h1v3h-1zM1069,230h1v2h-1z M1069,238h1v2h-1zM1072,229h1v3h-1z M1073,232h1v6h-1z M1072,238h1v3h-1zM1076,229h1v3h-1z M1075,232h1v6h-1z M1076,238h1v3h-1zM1074,230h1v2h-1z M1074,238h1v2h-1zM1078,229h1v3h-1z M1079,232h1v6h-1z M1078,238h1v3h-1zM1082,229h1v3h-1z M1081,232h1v6h-1z M1082,238h1v3h-1zM1080,230h1v2h-1z M1080,238h1v2h-1zM1084,229h1v3h-1z M1085,232h1v6h-1z M1084,238h1v3h-1zM1088,229h1v3h-1z M1087,232h1v6h-1z M1088,238h1v3h-1zM1086,230h1v2h-1z M1086,238h1v2h-1zM1089,229h1v3h-1z M1090,232h1v6h-1z M1089,238h1v3h-1zM1093,229h1v3h-1z M1092,232h1v6h-1z M1093,238h1v3h-1zM1091,230h1v2h-1z M1091,238h1v2h-1zM1095,229h1v3h-1z M1096,232h1v6h-1z M1095,238h1v3h-1zM1099,229h1v3h-1z M1098,232h1v6h-1z M1099,238h1v3h-1zM1097,230h1v2h-1z M1097,238h1v2h-1zM1100,229h1v3h-1z M1101,232h1v6h-1z M1100,238h1v3h-1zM1104,229h1v3h-1z M1103,232h1v6h-1z M1104,238h1v3h-1zM1102,230h1v2h-1z M1102,238h1v2h-1zM1106,229h1v3h-1z M1107,232h1v6h-1z M1106,238h1v3h-1zM1110,229h1v3h-1z M1109,232h1v6h-1z M1110,238h1v3h-1zM1108,230h1v2h-1z M1108,238h1v2h-1zM1112,229h1v3h-1z M1113,232h1v6h-1z M1112,238h1v3h-1zM1116,229h1v3h-1z M1115,232h1v6h-1z M1116,238h1v3h-1zM1114,230h1v2h-1z M1114,238h1v2h-1zM1117,229h1v3h-1z M1118,232h1v6h-1z M1117,238h1v3h-1zM1121,229h1v3h-1z M1120,232h1v6h-1z M1121,238h1v3h-1zM1119,230h1v2h-1z M1119,238h1v2h-1zM1123,229h1v3h-1z M1124,232h1v6h-1z M1123,238h1v3h-1zM1127,229h1v3h-1z M1126,232h1v6h-1z M1127,238h1v3h-1zM1125,230h1v2h-1z M1125,238h1v2h-1zM1129,229h1v3h-1z M1130,232h1v6h-1z M1129,238h1v3h-1zM1133,229h1v3h-1z M1132,232h1v6h-1z M1133,238h1v3h-1zM1131,230h1v2h-1z M1131,238h1v2h-1zM1134,229h1v3h-1z M1135,232h1v6h-1z M1134,238h1v3h-1zM1138,229h1v3h-1z M1137,232h1v6h-1z M1138,238h1v3h-1zM1136,230h1v2h-1z M1136,238h1v2h-1zM1140,229h1v3h-1z M1141,232h1v6h-1z M1140,238h1v3h-1zM1144,229h1v3h-1z M1143,232h1v6h-1z M1144,238h1v3h-1zM1142,230h1v2h-1z M1142,238h1v2h-1zM1145,229h1v3h-1z M1146,232h1v6h-1z M1145,238h1v3h-1zM1149,229h1v3h-1z M1148,232h1v6h-1z M1149,238h1v3h-1zM1147,230h1v2h-1z M1147,238h1v2h-1zM1151,229h1v3h-1z M1152,232h1v6h-1z M1151,238h1v3h-1zM1155,229h1v3h-1z M1154,232h1v6h-1z M1155,238h1v3h-1zM1153,230h1v2h-1z M1153,238h1v2h-1zM1157,229h1v3h-1z M1158,232h1v6h-1z M1157,238h1v3h-1zM1161,229h1v3h-1z M1160,232h1v6h-1z M1161,238h1v3h-1zM1159,230h1v2h-1z M1159,238h1v2h-1zM1163,229h1v3h-1z M1164,232h1v6h-1z M1163,238h1v3h-1zM1167,229h1v3h-1z M1166,232h1v6h-1z M1167,238h1v3h-1zM1165,230h1v2h-1z M1165,238h1v2h-1zM1168,229h1v3h-1z M1169,232h1v6h-1z M1168,238h1v3h-1zM1172,229h1v3h-1z M1171,232h1v6h-1z M1172,238h1v3h-1zM1170,230h1v2h-1z M1170,238h1v2h-1zM1175,229h1v3h-1z M1176,232h1v6h-1z M1175,238h1v3h-1zM1179,229h1v3h-1z M1178,232h1v6h-1z M1179,238h1v3h-1zM1177,230h1v2h-1z M1177,238h1v2h-1zM1180,229h1v3h-1z M1181,232h1v6h-1z M1180,238h1v3h-1zM1184,229h1v3h-1z M1183,232h1v6h-1z M1184,238h1v3h-1zM1182,230h1v2h-1z M1182,238h1v2h-1zM1186,229h1v3h-1z M1187,232h1v6h-1z M1186,238h1v3h-1zM1190,229h1v3h-1z M1189,232h1v6h-1z M1190,238h1v3h-1zM1188,230h1v2h-1z M1188,238h1v2h-1z" fill="#22d022"/><path d="M231,258h105v1h-105z M336,245h1v14h-1z M336,245h3v1h-3z M339,245h1v14h-1zM339,258h210v1h-210z M549,245h1v14h-1z M549,245h3v1h-3z M552,245h1v14h-1zM552,258h210v1h-210z M762,245h1v14h-1z M762,245h3v1h-3z M765,245h1v14h-1zM765,258h210v1h-210z M975,245h1v14h-1z M975,245h3v1h-3z M978,245h1v14h-1zM978,258h210v1h-210z M1188,245h1v14h-1z M1188,245h3v1h-3z M1191,245h1v14h-1z" fill="#22d022"/><rect x="231" y="259" width="958" height="1" fill="#0c580c"/><rect x="231" y="260" width="958" height="1" fill="#063806"/><rect x="231" y="261" width="958" height="1" fill="#107010"/><path d="M214,262h121v1h-121z M214,275h121v1h-121zM339,262h209v1h-209z M339,275h209v1h-209zM552,262h209v1h-209z M552,275h209v1h-209zM765,262h209v1h-209z M765,275h209v1h-209zM978,262h209v1h-209z M978,275h209v1h-209zM1191,262h17v1h-17z M1191,275h17v1h-17zM335,263h1v3h-1z M336,266h1v6h-1z M335,272h1v3h-1zM339,263h1v3h-1z M338,266h1v6h-1z M339,272h1v3h-1zM337,264h1v2h-1z M337,272h1v2h-1zM548,263h1v3h-1z M549,266h1v6h-1z M548,272h1v3h-1zM552,263h1v3h-1z M551,266h1v6h-1z M552,272h1v3h-1zM550,264h1v2h-1z M550,272h1v2h-1zM761,263h1v3h-1z M762,266h1v6h-1z M761,272h1v3h-1zM765,263h1v3h-1z M764,266h1v6h-1z M765,272h1v3h-1zM763,264h1v2h-1z M763,272h1v2h-1zM974,263h1v3h-1z M975,266h1v6h-1z M974,272h1v3h-1zM978,263h1v3h-1z M977,266h1v6h-1z M978,272h1v3h-1zM976,264h1v2h-1z M976,272h1v2h-1zM1187,263h1v3h-1z M1188,266h1v6h-1z M1187,272h1v3h-1zM1191,263h1v3h-1z M1190,266h1v6h-1z M1191,272h1v3h-1zM1189,264h1v2h-1z M1189,272h1v2h-1z" fill="#22d022"/><text x="232" y="272" font-size="10" fill="#fff" textLength="31.2" lengthAdjust="spacingAndGlyphs">-15_767</text><text x="340" y="272" font-size="10" fill="#fff" textLength="31.2" lengthAdjust="spacingAndGlyphs">-13_273</text><text x="553" y="272" font-size="10" fill="#fff" textLength="31.2" lengthAdjust="spacingAndGlyphs">-10_461</text><text x="766" y="272" font-size="10" fill="#fff" textLength="22.2" lengthAdjust="spacingAndGlyphs">-7425</text><text x="979" y="272" font-size="10" fill="#fff" textLength="22.2" lengthAdjust="spacingAndGlyphs">-4174</text><path d="M265,231h1v7h-1zM266,232h1v5h-1zM267,233h1v3h-1zM268,234h1v1h-1z" fill="#fff"/><path d="M329,231h1v7h-1zM330,232h1v5h-1zM331,233h1v3h-1zM332,234h1v1h-1z" fill="#fff"/><rect x="1145" y="162" width="1" height="448" fill="#a80000"/><rect x="1063" y="150" width="83" height="13" fill="#f01010"/><text x="1066" y="160" font-size="10" fill="#fff" textLength="77" lengthAdjust="spacingAndGlyphs">TimeA = 102,314ns</text><path d="M1186,189q3,-2 2,1h-3" stroke="#e0c000" fill="none"/></svg></g>
<rect x="1189" y="126" width="11" height="51" fill="#e6e6e6" />
<rect x="1189" y="177" width="11" height="433" fill="#c8c8c8" />
<rect x="1190" y="178" width="10" height="14" fill="#dedede" />
<path d="M1191,189h8l-4,-8z" fill="#ececec" stroke="#b0b0b0" stroke-width="1" />
<rect x="1191" y="192" width="9" height="402" fill="#e8e8e8" />
<rect x="1191" y="192" width="1" height="402" fill="#fafafa" />
<path d="M1191,598h8l-4,8z" fill="#ececec" stroke="#b0b0b0" stroke-width="1" />
<rect x="30" y="610" width="134" height="2" fill="#8c8c8c" />
<rect x="169" y="610" width="57" height="2" fill="#8c8c8c" />
<rect x="231" y="610" width="958" height="2" fill="#8c8c8c" />
<rect x="247" y="612" width="942" height="13" fill="#000" />
<rect x="231" y="612" width="16" height="13" fill="#c4c4c4" />
<path d="M244,613.5v10l-9,-5z" fill="#ececec" stroke="#b8b8b8" stroke-width="1" />
<rect x="247" y="612" width="2" height="13" fill="#a00000" />
<text x="340" y="622" font-size="10" fill="#fff" textLength="26.4" lengthAdjust="spacingAndGlyphs">10,000</text>
<text x="430" y="622" font-size="10" fill="#fff" textLength="26.4" lengthAdjust="spacingAndGlyphs">20,000</text>
<text x="520" y="622" font-size="10" fill="#fff" textLength="26.4" lengthAdjust="spacingAndGlyphs">30,000</text>
<text x="610" y="622" font-size="10" fill="#fff" textLength="26.4" lengthAdjust="spacingAndGlyphs">40,000</text>
<text x="701" y="622" font-size="10" fill="#fff" textLength="26.4" lengthAdjust="spacingAndGlyphs">50,000</text>
<text x="791" y="622" font-size="10" fill="#fff" textLength="26.4" lengthAdjust="spacingAndGlyphs">60,000</text>
<text x="881" y="622" font-size="10" fill="#fff" textLength="26.4" lengthAdjust="spacingAndGlyphs">70,000</text>
<text x="972" y="622" font-size="10" fill="#fff" textLength="26.4" lengthAdjust="spacingAndGlyphs">80,000</text>
<text x="1062" y="622" font-size="10" fill="#fff" textLength="26.4" lengthAdjust="spacingAndGlyphs">90,000</text>
<path d="M265,623h1v2h-1zM283,623h1v2h-1zM301,623h1v2h-1zM319,623h1v2h-1zM338,615h1v10h-1zM355,623h1v2h-1zM373,623h1v2h-1zM391,623h1v2h-1zM410,623h1v2h-1zM428,615h1v10h-1zM446,623h1v2h-1zM464,623h1v2h-1zM482,623h1v2h-1zM500,623h1v2h-1zM518,615h1v10h-1zM536,623h1v2h-1zM554,623h1v2h-1zM572,623h1v2h-1zM590,623h1v2h-1zM608,615h1v10h-1zM626,623h1v2h-1zM644,623h1v2h-1zM662,623h1v2h-1zM680,623h1v2h-1zM699,615h1v10h-1zM717,623h1v2h-1zM735,623h1v2h-1zM753,623h1v2h-1zM771,623h1v2h-1zM789,615h1v10h-1zM807,623h1v2h-1zM825,623h1v2h-1zM843,623h1v2h-1zM861,623h1v2h-1zM879,615h1v10h-1zM897,623h1v2h-1zM915,623h1v2h-1zM933,623h1v2h-1zM951,623h1v2h-1zM970,615h1v10h-1zM987,623h1v2h-1zM1006,623h1v2h-1zM1024,623h1v2h-1zM1042,623h1v2h-1zM1060,615h1v10h-1zM1078,623h1v2h-1zM1096,623h1v2h-1zM1114,623h1v2h-1zM1132,623h1v2h-1z" fill="#fff" shape-rendering="crispEdges"/>
<text x="250" y="622" font-size="10" fill="#fff">0</text>
<text x="1130" y="622" font-size="10" fill="#fff" textLength="13" lengthAdjust="spacingAndGlyphs">102</text>
<rect x="1147" y="612" width="27" height="13" fill="#a8a8a8" />
<rect x="1147" y="612" width="25" height="10" fill="#e8e8e8" />
<rect x="1147" y="612" width="25" height="1" fill="#f8f8f8" />
<path d="M1143.5,626l4,-5 4,5zM1169.5,626l4,-5 4,5z" fill="#d8d8d8" stroke="#202020" stroke-width="1" />
<rect x="1151" y="624" width="19" height="2" fill="#202020" />
<rect x="1174" y="612" width="15" height="13" fill="#c0c0c0" />
<path d="M1176,613.5v10l9,-5z" fill="#ececec" stroke="#b8b8b8" stroke-width="1" />
<rect x="1189" y="610" width="11" height="16" fill="#e6e6e6" />
<rect x="30" y="612" width="134" height="13" fill="#b8b8b8" />
<path d="M42.5,613.5v10l-9,-5z" fill="#ececec" stroke="#c0c0c0" stroke-width="1" />
<rect x="45" y="612" width="104" height="12" fill="#e8e8e8" />
<rect x="45" y="612" width="104" height="1" fill="#fafafa" />
<rect x="147" y="612" width="2" height="12" fill="#a0a0a0" />
<rect x="45" y="623" width="104" height="1" fill="#a0a0a0" />
<path d="M151,613.5v10l9,-5z" fill="#ececec" stroke="#c0c0c0" stroke-width="1" />
<rect x="169" y="612" width="44" height="13" fill="#b8b8b8" />
<path d="M180.5,613.5v10l-9,-5z" fill="#ececec" stroke="#c0c0c0" stroke-width="1" />
<rect x="184" y="612" width="13" height="12" fill="#e8e8e8" />
<rect x="195" y="612" width="2" height="12" fill="#a0a0a0" />
<rect x="184" y="623" width="13" height="1" fill="#a0a0a0" />
<path d="M199,613.5v10l9,-5z" fill="#ececec" stroke="#c0c0c0" stroke-width="1" />
<rect x="213" y="610" width="13" height="15" fill="#ececec" />
<rect x="216" y="614" width="1" height="8" fill="#000" />
<rect x="218" y="616" width="5" height="1" fill="#000" />
<rect x="218" y="619" width="5" height="1" fill="#000" />
<rect x="0" y="625" width="1200" height="1" fill="#d4d4d4" />
<rect x="0" y="626" width="1200" height="3" fill="#fafafa" />
<rect x="0" y="629" width="1200" height="1" fill="#a0a0a0" />
<rect x="0" y="630" width="1200" height="17" fill="#e6e6e6" />
<rect x="1" y="626" width="27" height="3" fill="#fafafa" />
<path d="M9,638m-5,0a5,5 0 1,0 10,0a5,5 0 1,0 -10,0" fill="#f0d0c0" stroke="#c03020" stroke-width="2" />
<path d="M6,641l6,-6" fill="none" stroke="#c03020" stroke-width="1.5" />
<path d="M12,634l3,-2" fill="none" stroke="#707070" stroke-width="1.5" />
<rect x="17" y="631" width="1" height="15" fill="#a0a0a0" />
<rect x="18" y="631" width="1" height="15" fill="#fafafa" />
<path d="M22,633h4l2,2-2,2h-2M24,637h2l2,2-2,3h-4" fill="none" stroke="#505050" stroke-width="1.2" />
<path d="M29,634v8l4,-4z" fill="#e0e0e0" stroke="#505050" stroke-width="1" />
<rect x="35" y="631" width="1" height="15" fill="#a0a0a0" />
<rect x="36" y="631" width="1" height="15" fill="#fafafa" />
<path d="M37.5,632.5h10v11h-10z" fill="#8aa0d0" stroke="#50608a" stroke-width="1" />
<rect x="40" y="633" width="5" height="3" fill="#e0e8f0" />
<rect x="39" y="639" width="7" height="4" fill="#6070a0" />
<rect x="1110" y="630" width="1" height="17" fill="#8a8a8a" />
<rect x="1111" y="630" width="1" height="17" fill="#fafafa" />
<rect x="1199" y="630" width="1" height="17" fill="#a0a0a0" />
<text x="1113" y="642" font-size="10.5" fill="#000" textLength="82" lengthAdjust="spacingAndGlyphs">0 objects selected</text></svg></body></html>
